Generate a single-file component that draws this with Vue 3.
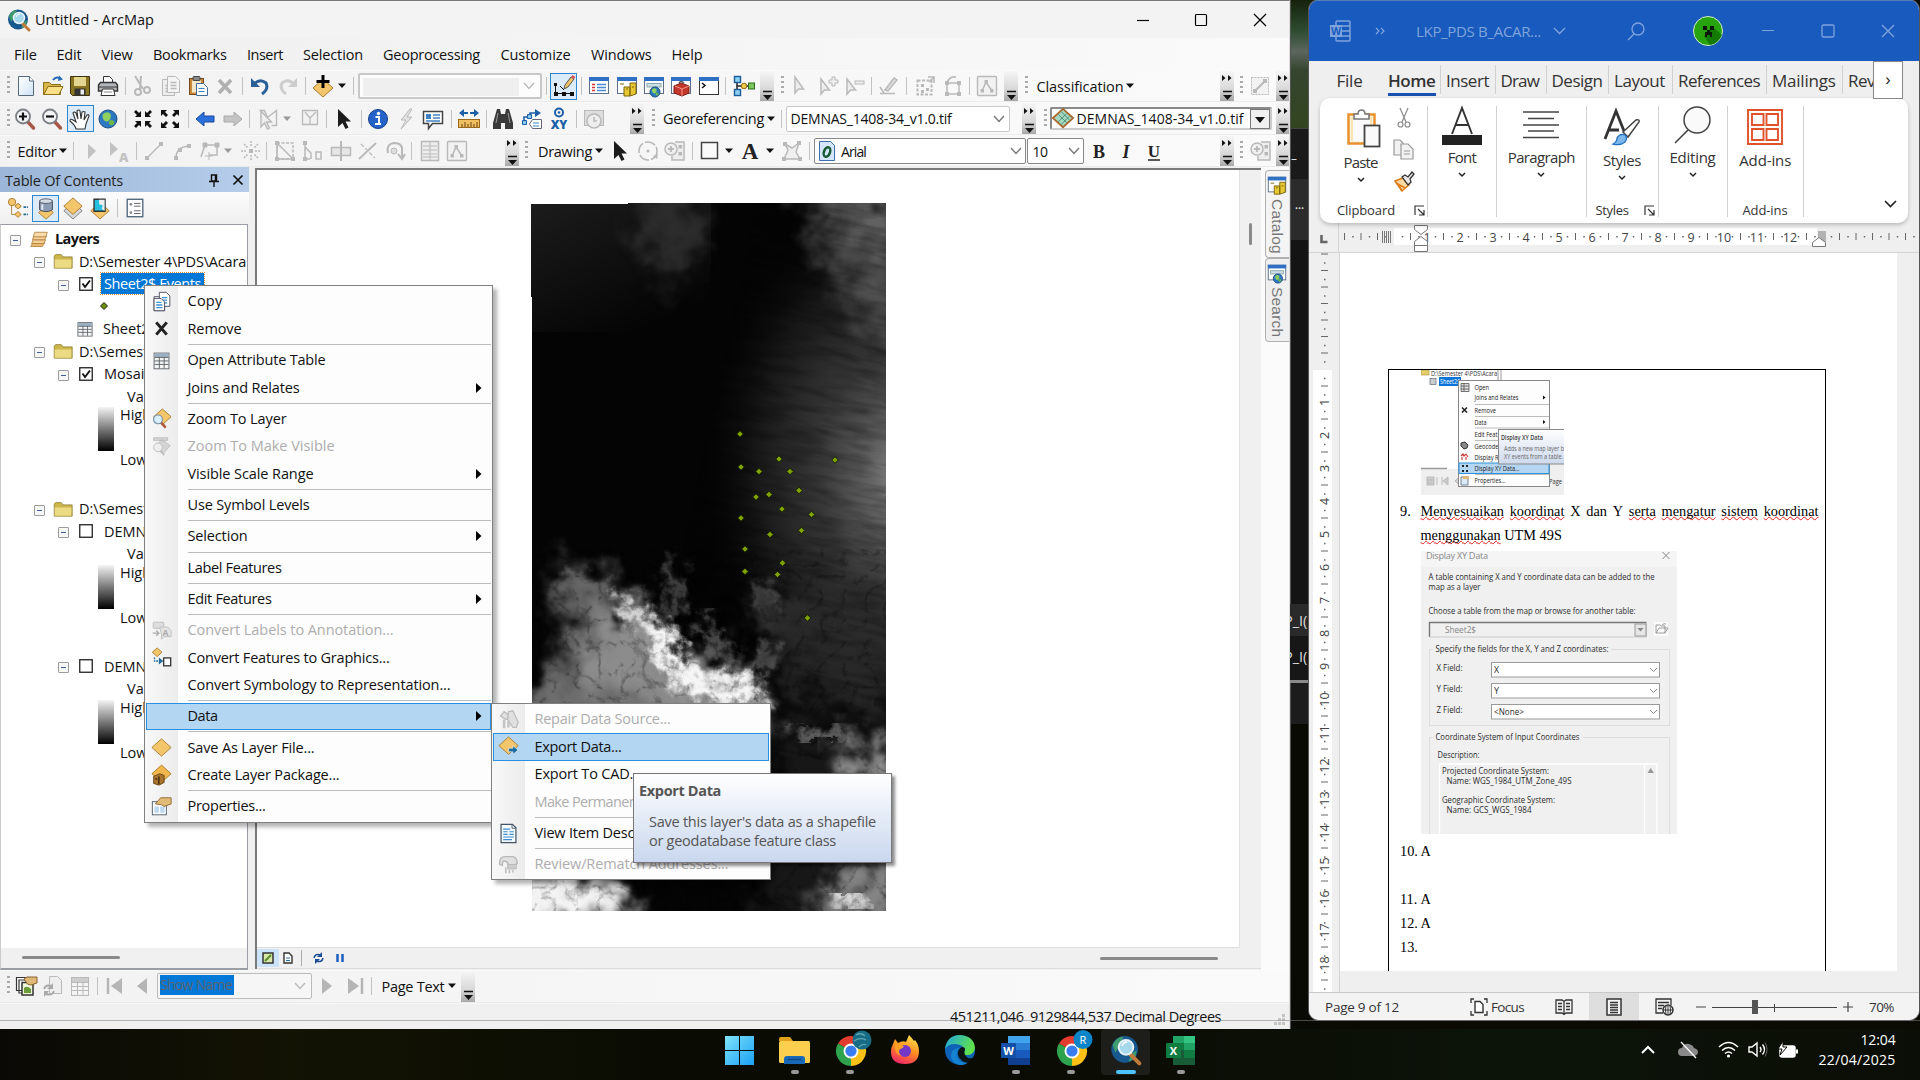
<script setup>
const measure = (el, width) => {
  el.style.letterSpacing = '0px'
  const natural = el.getBoundingClientRect().width
  const n = el.textContent.length
  if (width && n) el.style.letterSpacing = (width - natural) / n + 'px'
}
const vFit = {
  mounted: (el, b) => {
    if (b.value) measure(el, b.value)
  }
}

const G = '#b9b9b9'
const diamond = (x, y, r, f = '#f3c66c', s = '#a8782c') =>
  `<path d="M${x} ${y - r * 0.9}L${x + r} ${y}L${x} ${y + r * 0.9}L${x - r} ${y}Z" fill="${f}" stroke="${s}"/>`
const win = (inner) =>
  `<rect x="2.5" y="3.5" width="19" height="16" fill="#fff" stroke="#5b6f86"/><rect x="2" y="3" width="20" height="4" fill="#2f6fc4"/>${inner}`
const box = '<rect x="3.5" y="3.5" width="17" height="17" fill="none" stroke="#b9b9b9"/>'
const globe = (x, y, r) =>
  `<circle cx="${x}" cy="${y}" r="${r}" fill="#2c78c0" stroke="#1c4f86"/><path d="M${x - r * 0.6} ${y - r * 0.5}q${r * 0.6} ${-r * 0.5} ${r * 0.9} 0q${r * 0.1} ${r * 0.6} ${-r * 0.4} ${r * 0.8}q${-r * 0.6} ${-r * 0.1} ${-r * 0.5} ${-r * 0.8}z" fill="#8fd05c"/><circle cx="${x + r * 0.4}" cy="${y + r * 0.4}" r="${r * 0.3}" fill="#6cb94a"/>`
const pageIcon = (x, y, c, f) =>
  `<path d="M${x} ${y}h8l4 4v12h-12z" fill="${f}" stroke="${c}"/><path d="M${x + 3} ${y + 6}h6M${x + 3} ${y + 9}h6M${x + 3} ${y + 12}h6" stroke="${f === '#fff' ? '#3f8fd0' : c}" stroke-width="1.400"/>`
const tbl = (c, h) =>
  `<rect x="3.5" y="3.5" width="17" height="18" fill="#f4f4f4" stroke="${c}"/><rect x="4" y="4" width="16" height="4" fill="${h}"/><path d="M4 8.5h16M4 12.5h16M4 16.5h16M9.5 8v13M15 8v13" stroke="${c}"/>`
const lens = (x, y) =>
  `<path d="M${x + 3} ${y + 3}l5 5.500" stroke="#b05a3c" stroke-width="3" stroke-linecap="round"/><circle cx="${x}" cy="${y}" r="5" fill="#d9f0fb" stroke="#7d93a8" stroke-width="1.400"/>`

const icons = {
  fresh: '<defs><linearGradient id="pg" x1="0" y1="0" x2="1" y2="1"><stop offset="0" stop-color="#fff"/><stop offset="1" stop-color="#cfe3f5"/></linearGradient></defs><path d="M4.500 2.500h11l4 4.500v14.500h-15z" fill="url(#pg)" stroke="#55687c"/><path d="M15.500 2.500v4.500h4" fill="#fff" stroke="#55687c"/>',
  open: '<path d="M2.500 20.500v-12h6l2 2h9v10z" fill="#d9b64a" stroke="#8f6e18"/><path d="M3 20.500l4-8h15l-4 8z" fill="#fbe08a" stroke="#8f6e18"/><path d="M12 6q3-4 7-1.500" stroke="#246cb4" stroke-width="2" fill="none"/><path d="M18 1.500l4 4-5 1.500z" fill="#246cb4"/>',
  save: '<path d="M2.500 2.500h19v19h-17l-2-2z" fill="#8a7424" stroke="#3b3110"/><rect x="6" y="3" width="12" height="9" fill="#e4d68e"/><rect x="6.500" y="14.500" width="11" height="7" fill="#333"/><rect x="12.500" y="15.500" width="3.500" height="5" fill="#eee"/>',
  print: '<path d="M7.500 9V2.500h6l3 3V9" fill="#fff" stroke="#333"/><path d="M2.500 11l2-2.500h15l2 2.500v6h-19z" fill="#b4b8bc" stroke="#333" stroke-width="1.400"/><path d="M3 13h18" stroke="#333"/><path d="M6.500 15h11l1.500 6.500h-14z" fill="#fff" stroke="#333"/><path d="M8 18h8" stroke="#888"/>',
  cut: `<path d="M6 2l8 13M12 2l-1 13" stroke="${G}" stroke-width="2"/><circle cx="9" cy="18" r="3" fill="none" stroke="${G}" stroke-width="2"/><circle cx="18" cy="16" r="3" fill="none" stroke="${G}" stroke-width="2"/>`,
  copy: pageIcon(3.5, 5.5, G, '#eee') + pageIcon(8.5, 2.5, G, '#f4f4f4'),
  paste: '<rect x="3.500" y="4.500" width="14" height="16" fill="#c98a3c" stroke="#74481a"/><rect x="6" y="6.500" width="9" height="12" fill="#f6e7c8"/><rect x="7" y="2.500" width="7" height="4" rx="1" fill="#888" stroke="#444"/><path d="M10.500 9.500h7l4 4v8h-11z" fill="#fff" stroke="#3f6c9a"/><path d="M12.500 14.500h6M12.500 17.500h6" stroke="#3f82c4"/>',
  del: '<path d="M6 6l12 13M18 6L6 19" stroke="#b0b0b0" stroke-width="3.500"/>',
  undo: '<path d="M6 10q6-6 12-1q3 6-4 11" fill="none" stroke="#2b5f98" stroke-width="3"/><path d="M3 4v9h9z" fill="#2b5f98"/>',
  redo: '<path d="M18 10q-6-6-12-1q-3 6 4 11" fill="none" stroke="#cdcdcd" stroke-width="3"/><path d="M21 4v9h-9z" fill="#cdcdcd"/>',
  add: diamond(12, 14, 10) + '<path d="M12 1v13M5.500 7.500h13" stroke="#000" stroke-width="3"/>',
  sketch: '<path d="M3 19.500h18" stroke="#111"/><path d="M2 18h4v4h-4zM10 18h4v4h-4zM18 18h4v4h-4zM2 9h3v3h-3z" fill="#111"/><path d="M3.500 11v8M8 12l4 4" stroke="#111" fill="none"/><path d="M12 15l1-4 6-8 3 2-6 8z" fill="#f0c468" stroke="#555"/><path d="M19 3l1.500-2 3 2-1.500 2z" fill="#d55"/>',
  wlist: win('<path d="M5 10.500h3M5 13.500h3M5 16.500h3" stroke="#d33" stroke-width="1.500"/><path d="M10 10.500h9M10 13.500h9M10 16.500h9" stroke="#4a8ad4" stroke-width="1.500"/>'),
  wcat: win('<path d="M9 13h6v9h-6zM15 9h6v11l-6 2z" fill="#e8c832" stroke="#7c6410"/><path d="M11 15h2M17 13h2M5 10h4" stroke="#7c6410"/>'),
  wsearch: win('<rect x="5" y="9.500" width="14" height="3.500" fill="#cfdcea" stroke="#8aa"/>' + globe(13, 18, 5)),
  wtool: win('<path d="M5 12l7-3 8 3v7l-7 3-8-3z" fill="#c4372b" stroke="#7c1c14"/><path d="M10 9q2-3 5 0" fill="none" stroke="#555" stroke-width="1.500"/><path d="M6 12l7 3 7-3M13 15v7" stroke="#f2968c" fill="none"/>'),
  wpy: '<rect x="2.500" y="3.500" width="19" height="17" fill="#fff" stroke="#333"/><rect x="2" y="3" width="20" height="4" fill="#2f6fc4"/><path d="M5 9l3 2.500-3 2.500" fill="none" stroke="#111" stroke-width="1.500"/>',
  model: '<path d="M5 6v12M5 12h14" stroke="#222" stroke-width="1.500"/><rect x="2.500" y="2.500" width="6" height="6" fill="#8cd0f4" stroke="#1a5c98" stroke-width="1.400"/><rect x="2.500" y="15.500" width="6" height="6" fill="#8cd0f4" stroke="#1a5c98" stroke-width="1.400"/><circle cx="12" cy="12" r="2.800" fill="#f0c84a" stroke="#8a6a14"/><rect x="16.500" y="9" width="6" height="6" fill="#7cc85a" stroke="#2e6a1c"/>',
  garrow: `<path d="M9 3v16l3.500-4h5z" fill="#ededed" stroke="${G}" stroke-width="1.500"/>`,
  garrowp: `<path d="M5 5v15l3.500-4h5z" fill="#ededed" stroke="${G}" stroke-width="1.500"/><path d="M13 6h3v-3h3v3h3v3h-3v3h-3v-3h-3z" fill="#eee" stroke="${G}"/>`,
  garrowm: `<path d="M4 5v15l3.500-4h5z" fill="#ededed" stroke="${G}" stroke-width="1.500"/><rect x="12" y="7" width="9" height="3" fill="#eee" stroke="${G}"/>`,
  gpen: `<path d="M8 16l9-12 3 2-9 11zM3 19.500h15M3 13l4 6" fill="#ddd" stroke="${G}" stroke-width="1.500"/>`,
  gsel: `<rect x="4.500" y="6.500" width="14" height="14" fill="none" stroke="${G}" stroke-width="2" stroke-dasharray="3 1.500"/><path d="M8 10h3v3h-3zM13 14h3v3h-3zM8 16h3v3h-3z" fill="${G}"/><path d="M15 3h6v6M21 3l-5 5" fill="none" stroke="${G}" stroke-width="1.500"/>`,
  gpoly: `<path d="M6 9h12v11h-12zM6 9q2-7 9-6" fill="none" stroke="${G}" stroke-width="1.500"/><path d="M4 7h4v4h-4zM16 7h4v4h-4zM4 18h4v4h-4zM16 18h4v4h-4z" fill="${G}"/>`,
  gbox: '<rect x="2.500" y="2.500" width="19" height="19" rx="1" fill="#f2f2f2" stroke="#b9b9b9" stroke-width="1.400"/>' + `<path d="M7 17l4-9 6 9" fill="none" stroke="${G}" stroke-width="1.500"/><path d="M5.500 15h3.500v3.500h-3.500zM9.500 6h3.500v3.500h-3.500zM15 15h3.500v3.500h-3.500z" fill="${G}"/>`,
  gdash: `<rect x="3.500" y="3.500" width="17" height="17" fill="#f2f2f2" stroke="${G}" stroke-dasharray="2 1"/><path d="M7 17L17 7" stroke="${G}" stroke-width="2"/><path d="M5 15h4v4h-4zM15 5h4v4h-4z" fill="${G}"/>`,
  zin: '<path d="M14 14l6.500 7" stroke="#a85848" stroke-width="3.500" stroke-linecap="round"/><circle cx="10" cy="9.500" r="7" fill="#f2f4f6" stroke="#7b7f84" stroke-width="1.800"/><path d="M10 5.500v8M6 9.500h8" stroke="#111" stroke-width="2.200"/>',
  zout: '<path d="M14 14l6.500 7" stroke="#a85848" stroke-width="3.500" stroke-linecap="round"/><circle cx="10" cy="9.500" r="7" fill="#f2f4f6" stroke="#7b7f84" stroke-width="1.800"/><path d="M6 9.500h8" stroke="#111" stroke-width="2.200"/>',
  hand: '<path d="M8 22q-1-4-6-8q0-3 3-1l3 2-3-9q1-2 3 0l2 6-1-8q2-2 3 0l1 8 1-7q2-1 3 0l-1 8 3-5q2-1 2 1l-3 8-1 5z" fill="#fff" stroke="#333" stroke-width="1.100"/>',
  globe: globe(12, 12, 9),
  shrink: '<path d="M10 10v-6l-2 2-3-3-2 2 3 3-2 2zM14 10v-6l2 2 3-3 2 2-3 3 2 2zM10 14v6l-2-2-3 3-2-2 3-3-2-2zM14 14v6l2-2 3 3 2-2-3-3 2-2z" fill="#111"/>',
  grow: '<path d="M3 3h6l-2 2 3 3-2 2-3-3-2 2zM21 3h-6l2 2-3 3 2 2 3-3 2 2zM3 21h6l-2-2 3-3-2-2-3 3-2-2zM21 21h-6l2-2-3-3 2-2 3 3 2-2z" fill="#111"/>',
  back: '<path d="M2 12l8-7v4h10v6h-10v4z" fill="#2a6fdc" stroke="#1a4a9c"/>',
  fwd: '<path d="M22 12l-8-7v4h-10v6h10v4z" fill="#c4c4c4" stroke="#aaa"/>',
  gself: `<path d="M3.500 3.500h5l3 7 9-7v15h-5" fill="none" stroke="${G}" stroke-width="1.400"/><path d="M5 4v16l3.500-4 3 6 2-1-3-6h5z" fill="#eee" stroke="${G}" stroke-width="1.400"/>`,
  gclr: `<path d="M4.500 3.500h15v14h-15zM7 5l5 6v6M12 11l6-6" fill="#f2f2f2" stroke="${G}" stroke-width="1.300"/>`,
  arrow: '<path d="M7 2v18l4.500-4 3 6 3-1.500-3-6h5.500z" fill="#1c1c1c"/>',
  info: '<circle cx="12" cy="12" r="9.500" fill="#2464c8" stroke="#143f8a"/><path d="M9.500 10h3.500v7h2M9 17h6" stroke="#fff" stroke-width="2" fill="none"/><circle cx="12.500" cy="6.500" r="1.700" fill="#fff"/>',
  bolt: `<path d="M16 2l-9 11h5l-5 9 11-12h-5l5-8z" fill="#e2e2e2" stroke="${G}"/>`,
  popup: '<path d="M2.500 4.500h19v12h-10l-4 5v-5h-5z" fill="#fff" stroke="#444" stroke-width="1.500"/><rect x="5" y="7" width="5" height="5" fill="#3f82c4"/><path d="M12 8h7M12 11h7M5 14h14" stroke="#3f82c4" stroke-width="1.500"/>',
  ruler: '<path d="M2 6l5-4v3h4v2h-4v3zM22 6l-5-4v3h-4v2h4v3z" fill="#1c5fa8"/><rect x="1.500" y="12.500" width="21" height="8" fill="#f0bf62" stroke="#98671c"/><path d="M5 17v3M8 15v5M11 17v3M14 15v5M17 17v3M20 15v5" stroke="#6b4510"/>',
  binoc: '<path d="M6 2h3l1 5h4l1-5h3l4 14v6h-8v-6h-4v6h-8v-6z" fill="#3a3a3a"/><path d="M7 6l-2 10M17 6l2 10" stroke="#999"/>',
  route: '<path d="M4 18v-8h6v-4h6" fill="none" stroke="#1c5fa8" stroke-width="1.500"/><path d="M2.500 13.500h4v4h-4zM7.500 7.500h4v4h-4z" fill="#8cc8ec" stroke="#1c5fa8"/><path d="M15 2l6 4-6 4z" fill="#1c5fa8"/><path d="M12.500 12.500h9v9h-9l-3-4.500z" fill="#fff" stroke="#667"/><path d="M13 16h6M13 19h6" stroke="#3f82c4"/>',
  xy: '<circle cx="12" cy="5.500" r="4" fill="none" stroke="#1c5fa8" stroke-width="2"/><circle cx="12" cy="5.500" r="1.300" fill="#1c5fa8"/><text x="12" y="22" text-anchor="middle" font-family="Open Sans" font-weight="800" font-size="12" fill="#1c5fa8">XY</text>',
  gtime: `<rect x="2.500" y="3.500" width="19" height="15" fill="#ddd" stroke="${G}"/><circle cx="12" cy="14" r="7" fill="#eee" stroke="${G}" stroke-width="1.500"/><path d="M12 10v4h3" stroke="${G}" fill="none" stroke-width="1.500"/>`,
  gtri: '<path d="M8 5v15l8-8z" fill="#c2c2c2"/>',
  gtriA: '<path d="M3 3v14l8-7z" fill="#c2c2c2"/><text x="12" y="23" font-family="Open Sans" font-weight="800" font-size="13" fill="#c2c2c2">A</text>',
  gline: `<path d="M5 19L19 5" stroke="${G}" stroke-width="1.500"/><path d="M3 17h4v4h-4zM17 3h4v4h-4z" fill="${G}"/>`,
  gcurve: `<path d="M6 19q0-11 13-12" stroke="${G}" stroke-width="1.500" fill="none"/><path d="M4 17h4v4h-4zM17 5h4v4h-4zM8 9h4v4h-4z" fill="${G}"/>`,
  gtrap: `<path d="M3 18L7 6h12v10h-8" stroke="${G}" stroke-width="1.500" fill="none"/><path d="M5 4h4v4h-4zM17 4h4v4h-4zM11 13v8M7 17h8" fill="${G}" stroke="${G}"/>`,
  gburst: `<path d="M12 2v6M12 16v6M2 12h6M16 12h6M5 5l4 4M19 5l-4 4M5 19l4-4M19 19l-4-4" stroke="${G}" stroke-width="1.500" stroke-dasharray="2 1"/><rect x="10" y="10" width="4" height="4" fill="${G}"/>`,
  gcut1: `<path d="M4 4h16v16h-16z" fill="none" stroke="${G}" stroke-width="1.500" stroke-dasharray="3 1.500"/><path d="M4 4v16h16z" fill="none" stroke="${G}" stroke-width="1.500"/><path d="M2 2h4v4h-4zM2 18h4v4h-4zM18 18h4v4h-4z" fill="${G}"/>`,
  gcut2: `<path d="M5 4v16h5M5 8l6 6v6M16 13h5v7h-5z" fill="none" stroke="${G}" stroke-width="1.500"/><path d="M3 2h4v4h-4zM3 18h4v4h-4z" fill="${G}"/>`,
  gsplit: `<path d="M2.500 8.500h19v8h-19z" fill="#e6e6e6" stroke="${G}" stroke-width="1.500"/><path d="M12 2v20" stroke="${G}" stroke-width="2"/>`,
  gx: `<path d="M3 20L20 4" stroke="${G}" stroke-width="1.800"/><path d="M5 5l14 14" stroke="${G}" stroke-width="1.200" stroke-dasharray="4 2"/>`,
  grot: `<path d="M5 14q-2-9 6-10q9 0 8 8v6M15 15l4 5 3-5" fill="none" stroke="${G}" stroke-width="2"/><circle cx="11" cy="12" r="3" fill="#ddd" stroke="${G}"/>`,
  gtab: `<rect x="3.500" y="2.500" width="17" height="19" fill="#eee" stroke="${G}" stroke-width="1.500"/><path d="M5 7h14M5 11h14M5 15h14M5 18h14M12 3v18" stroke="${G}"/>`,
  rot: `<circle cx="12" cy="12" r="9" fill="none" stroke="${G}" stroke-width="1.600" stroke-dasharray="11 2"/><circle cx="12" cy="12" r="1.500" fill="${G}"/><path d="M17 17l4 3 1-5z" fill="${G}"/>`,
  gzoomp: `<path d="M12 3h9v18h-12v-4" stroke="${G}" stroke-width="1.500" fill="#eee"/><circle cx="8" cy="10" r="6" fill="#f0f0f0" stroke="${G}" stroke-width="1.500"/><path d="M8 7v6M5 10h6" stroke="${G}" stroke-width="1.800"/><path d="M15.500 6h3.500v3.500h-3.500zM15.500 13h3.500v3.500h-3.500z" fill="${G}"/>`,
  rect: '<rect x="3.500" y="3.500" width="16" height="16" fill="#fafafa" stroke="#444" stroke-width="1.500"/>',
  bigA: '<text x="12" y="20" text-anchor="middle" font-family="Liberation Serif" font-weight="700" font-size="23" fill="#222">A</text>',
  gverts: `<path d="M4 20l4-9-3-6 7 4 7-5-3 9 4 7z" fill="#f0f0f0" stroke="${G}" stroke-width="1.500"/><path d="M2 18h4v4h-4zM3 3h4v4h-4zM17 2h4v4h-4zM18 18h4v4h-4z" fill="${G}"/>`,
  B: '<text x="12" y="19" text-anchor="middle" font-family="Liberation Serif" font-weight="700" font-size="18" fill="#222">B</text>',
  I: '<text x="12" y="19" text-anchor="middle" font-family="Liberation Serif" font-weight="700" font-style="italic" font-size="18" fill="#222">I</text>',
  U: '<text x="12" y="18" text-anchor="middle" font-family="Liberation Serif" font-weight="700" font-size="17" fill="#222">U</text><path d="M6 21h12" stroke="#222" stroke-width="1.500"/>',
  pagestack: '<path d="M2.500 3.500h11v13h-11zM5 6h11v13h-11z" fill="#fff" stroke="#333" stroke-width="1.200"/><path d="M8 8.500h11v12.500h-11z" fill="#eef6dc" stroke="#333" stroke-width="1.500"/><path d="M10 19v-5q3-3 7 1v4z" fill="#6a9c3a"/><path d="M10 5q3-3 6-2h7v6l-6 2q-4 0-5-3z" fill="#e0b878" stroke="#8a6430"/>',
  grefresh: `<path d="M8.500 2.500h8l4 4v13h-12z" fill="#eee" stroke="${G}"/><path d="M3 15q2-5 7-3M13 17q-2 5-8 3" stroke="#a8a8a8" stroke-width="2" fill="none"/><path d="M12 9v6h-6zM3 23v-6h5z" fill="#a8a8a8"/>`,
  gtable: tbl('#b9b9b9', '#ccc'),
  first: '<path d="M5 4v16" stroke="#b5b5b5" stroke-width="2.500"/><path d="M19 4v16l-11-8z" fill="#b5b5b5"/>',
  prev: '<path d="M17 4v16l-10-8z" fill="#b5b5b5"/>',
  next: '<path d="M7 4v16l10-8z" fill="#b5b5b5"/>',
  last: '<path d="M19 4v16" stroke="#b5b5b5" stroke-width="2.500"/><path d="M5 4v16l11-8z" fill="#b5b5b5"/>',
  toc1: '<path d="M5 6v13M5 19h7M10 11h5" stroke="#b08040" fill="none"/><circle cx="5.500" cy="5.500" r="4" fill="#f3c66c" stroke="#a8782c"/>' + diamond(12, 10, 3.5) + diamond(12, 19, 3.5) + '<path d="M18 11h5M18 19h5" stroke="#246c9c" stroke-width="2" stroke-dasharray="3 1"/>',
  toc2: diamond(12, 17, 8) + '<path d="M5 4v10q7 4 14 0v-10z" fill="#8c9cb4" stroke="#445"/><ellipse cx="12" cy="4.500" rx="7" ry="2.500" fill="#d4dce8" stroke="#556"/><path d="M8 8v6" stroke="#e8eef8" stroke-width="2"/>',
  toc3: diamond(12, 15, 10, '#d5d8da', '#7a7a7a') + diamond(12, 10, 10),
  toc4: diamond(12, 15, 10) + '<path d="M5.500 2.500h12v13h-12z" fill="#28c0e0" stroke="#333" stroke-width="1.500"/><path d="M11 3h6v12l-3-2 1-4-4-1z" fill="#eee"/>',
  toc5: '<rect x="3.500" y="2.500" width="17" height="19" fill="#fff" stroke="#55687c" stroke-width="1.500"/><path d="M11 7h7M11 10h7M11 15h7M11 18h7" stroke="#556"/><circle cx="7.500" cy="8" r="1.500" fill="#888"/><circle cx="7.500" cy="17" r="1.500" fill="#888"/>',
  layers: '<path d="M5 17h14l-3 5h-14z" fill="#e8b870" stroke="#b07c38"/><path d="M5 13h15l-2 5h-15z" fill="#f3cf98" stroke="#b07c38"/><path d="M6 8h15l-2 5h-15z" fill="#f3cf98" stroke="#b07c38"/><path d="M7 3h15l-2 6h-15z" fill="#f8dcae" stroke="#b07c38"/>',
  folder: '<path d="M1.500 21.500v-16l1.500-2h7l2 3h11v15z" fill="#cdb64c" stroke="#8a7a28"/><path d="M2 10h20v11h-20z" fill="#eadb84"/>',
  table: tbl('#6b7680', '#8cb4e0'),
  mtable: tbl('#555b60', '#9cb0c4'),
  mcopy: pageIcon(3.5, 6.5, '#445', '#fff') + pageIcon(9.5, 1.5, '#445', '#fff') + '<path d="M3.500 8.500h8l4 4v10h-12z" fill="#fff" stroke="#445"/><path d="M6 13h6M6 16h7M6 19h7" stroke="#3f8fd0" stroke-width="1.500"/>',
  mx: '<path d="M6 5l12 14M18 5L6 19" stroke="#222" stroke-width="3.500"/>',
  mzoom: diamond(13, 10, 10) + lens(8, 13),
  mzoomg: '<path d="M3 2h16v3h-16zM12 4l10 7-8 9-10-6z" fill="#d4d4d4" stroke="#bbb"/><circle cx="8" cy="13" r="5" fill="#eee" stroke="#bbb"/><path d="M11 17l4 5" stroke="#bbb" stroke-width="2"/>',
  mlabel: '<rect x="2.500" y="2.500" width="12" height="7" rx="1" fill="#ddd" stroke="#bbb"/><path d="M10 8h9l4 4v7h-8l-3 3v-5z" fill="#e4e4e4" stroke="#bbb"/><text x="13" y="18" font-family="Open Sans" font-size="10" font-weight="700" fill="#aaa">A</text><path d="M2 15h7M6 12l3 3-3 3" stroke="#aaa" fill="none" stroke-width="1.500"/>',
  mgraph: diamond(7, 6, 5.500) + '<path d="M4 12v4h8" stroke="#1c6ca0" stroke-width="1.500" fill="none" stroke-dasharray="2 1"/><path d="M9 12l5 4-5 4z" fill="#1c6ca0"/><rect x="14.500" y="12.500" width="8" height="9" fill="#fff" stroke="#333" stroke-width="1.500"/>',
  msave: diamond(12, 12, 11),
  mpack: diamond(12, 10, 11, '#f0b84c') + '<path d="M3 13l7-3 5 2v8l-6 3-6-2z" fill="#a8742c" stroke="#60401a"/><path d="M9 13v9M5 16h2" stroke="#3a240c" stroke-width="1.500"/>',
  mprop: '<rect x="1.500" y="6.500" width="16" height="15" fill="#fff" stroke="#456"/><path d="M4 12h5v7h-5zM10.500 12h5v7h-5z" fill="#bcd8f0"/><path d="M5 9l6-7h12v7l-8 3-3-2z" fill="#e0bc78" stroke="#8a6430"/>',
  mfix: '<path d="M3 8l4-5 4 3 1 4-3 2zM12 3l5-1 6 13-2 6h-4l-6-9z" fill="#e0e0e0" stroke="#bdbdbd" stroke-width="1.500"/><path d="M7 12v10M12 14v7" stroke="#c4c4c4" stroke-width="3"/>',
  mexport: diamond(12, 11, 11) + '<path d="M12 14h5v-3l6 5-6 5v-3h-5z" fill="#1c6ca0" stroke="#fff" stroke-width=".6"/>',
  mview: '<path d="M3.500 1.500h13l4 4v17h-17z" fill="#f4f9fe" stroke="#456" stroke-width="1.400"/><path d="M16 2v4h4" fill="none" stroke="#456"/><path d="M6 7h8M6 10h5M13 10h5M6 13h5M13 13h5M6 16h12M6 19h10" stroke="#3f8fd0" stroke-width="1.400"/>',
  mmail: '<path d="M2 12q-1-9 6-9h9q5 1 5 8l-4 2h-6q-1-5-5-5-2 0-2 5zM9 15v7M13 18v4M17 18v3" fill="#e0e0e0" stroke="#b8b8b8" stroke-width="1.600"/><path d="M11 12h10v5h-10z" fill="#ccc" stroke="#b8b8b8"/>',
  arc: '<circle cx="11" cy="11.500" r="10" fill="#17588e"/><path d="M2 8q3-6 8-6l-3 7-3 5zM16 15l4-3-1 6-5 3z" fill="#3f9c6c"/><path d="M15 15l7 7" stroke="#c07a3c" stroke-width="3" stroke-linecap="round"/><circle cx="12" cy="10" r="5.500" fill="#a4d8ea" stroke="#e8f2f8" stroke-width="1.500"/><path d="M9 9q1-3 4-3" stroke="#fff" fill="none"/>'
}

const widths = { i: 24, a: 27, s: 1, c: 8, o: 14, g: 3 }
function build(items) {
  let end = 0
  return items.map((it) => {
    const [t, x, v, w] = it
    let left, width
    if (t === 't' || t === 'd') { left = x; width = w } else if (t === 'o') { left = x; width = 14 } else { width = widths[t]; left = x - width / 2 }
    const m = left - end
    end = left + width
    return { t, v, w, k: it[4], style: { marginLeft: m + 'px', width: width + 'px' } }
  })
}
const menuBar = build([
  ['t', 14, 'File', 23], ['t', 56.5, 'Edit', 25], ['t', 101.5, 'View', 31], ['t', 153, 'Bookmarks', 73.5], ['t', 247, 'Insert', 36],
  ['t', 303, 'Selection', 60], ['t', 383, 'Geoprocessing', 97], ['t', 500.5, 'Customize', 70], ['t', 591, 'Windows', 60.5], ['t', 671.5, 'Help', 31]
])
const rows = [
  build([['g', 8], ['i', 26, 'fresh'], ['i', 52.5, 'open'], ['i', 80, 'save'], ['i', 107.5, 'print'], ['s', 125], ['i', 140.5, 'cut'], ['i', 171, 'copy'], ['i', 198, 'paste'], ['i', 225, 'del'], ['s', 242], ['i', 260, 'undo'], ['i', 288, 'redo'], ['s', 305], ['i', 322.5, 'add'], ['c', 342], ['s', 353.5], ['d', 358, '', 184, 'dis'], ['s', 546], ['a', 563.5, 'sketch'], ['s', 581], ['i', 599, 'wlist'], ['i', 626.5, 'wcat'], ['i', 654, 'wsearch'], ['i', 681, 'wtool'], ['i', 708.6, 'wpy'], ['s', 726], ['i', 744, 'model'], ['o', 760], ['g', 783], ['i', 798.5, 'garrow'], ['i', 828, 'garrowp'], ['i', 855.5, 'garrowm'], ['s', 872], ['i', 889, 'gpen'], ['s', 907], ['i', 925, 'gsel'], ['i', 953.5, 'gpoly'], ['s', 969.5], ['i', 987, 'gbox'], ['o', 1004], ['g', 1027], ['t', 1036.5, 'Classification', 87], ['c', 1130.5], ['o', 1220, 1], ['g', 1242], ['i', 1260, 'gdash'], ['o', 1276, 1]]),
  build([['g', 8], ['i', 25, 'zin'], ['i', 52, 'zout'], ['a', 80, 'hand'], ['i', 108, 'globe'], ['s', 125], ['i', 142.5, 'shrink'], ['i', 170, 'grow'], ['s', 188], ['i', 206, 'back'], ['i', 232, 'fwd'], ['s', 249.5], ['i', 268, 'gself'], ['c', 287, 'g'], ['i', 310, 'gclr'], ['s', 326], ['i', 343, 'arrow'], ['s', 361], ['i', 378, 'info'], ['i', 406, 'bolt'], ['i', 433, 'popup'], ['s', 451], ['i', 469, 'ruler'], ['s', 486], ['i', 503, 'binoc'], ['i', 532, 'route'], ['i', 559, 'xy'], ['s', 576], ['i', 594, 'gtime'], ['o', 630, 1], ['g', 653], ['t', 663, 'Georeferencing', 101], ['c', 770.5], ['s', 781], ['d', 785.5, 'DEMNAS_1408-34_v1.0.tif', 224, 'geo'], ['o', 1022, 1], ['g', 1045], ['d', 1049.5, 'DEMNAS_1408-34_v1.0.tif', 222, 'layer'], ['o', 1276, 1]]),
  build([['g', 8], ['t', 17.5, 'Editor', 39], ['c', 63], ['s', 73.5], ['i', 92, 'gtri'], ['i', 119, 'gtriA'], ['s', 136], ['i', 154, 'gline'], ['i', 181.6, 'gcurve'], ['i', 210, 'gtrap'], ['c', 228, 'g'], ['i', 251, 'gburst'], ['s', 267], ['i', 285, 'gcut1'], ['i', 312, 'gcut2'], ['i', 341, 'gsplit'], ['i', 368, 'gx'], ['i', 395.5, 'grot'], ['s', 412], ['i', 430, 'gtab'], ['i', 457, 'gbox'], ['o', 505, 1], ['g', 527], ['t', 538, 'Drawing', 54], ['c', 599.5], ['i', 619.5, 'arrow'], ['i', 647.6, 'rot'], ['i', 675, 'gzoomp'], ['s', 692.6], ['i', 710, 'rect'], ['c', 729], ['i', 750, 'bigA'], ['c', 770.5], ['i', 792, 'gverts'], ['s', 810], ['d', 814, 'Arial', 212, 'font'], ['d', 1027.5, '10', 57, 'size'], ['i', 1099, 'B'], ['i', 1126.5, 'I'], ['i', 1154, 'U'], ['o', 1220, 1], ['g', 1242], ['i', 1261, 'gzoomp'], ['o', 1276, 1]])
]
const bottomRow = build([['g', 8], ['i', 25.5, 'pagestack'], ['i', 53, 'grefresh'], ['i', 79.5, 'gtable'], ['s', 97], ['i', 114.5, 'first'], ['i', 142, 'prev'], ['d', 157, 'Show Name', 155, 'show'], ['i', 327, 'next'], ['i', 354.5, 'last'], ['s', 371], ['t', 381.5, 'Page Text', 63], ['c', 452], ['o', 461]])
const bars = [...rows, bottomRow]
const fitOf = { geo: 161, layer: 167, font: 25, size: 15, show: 72 }

const tocTools = build([['i', 18, 'toc1'], ['a', 45.5, 'toc2'], ['i', 73, 'toc3'], ['i', 100, 'toc4'], ['s', 117], ['i', 135, 'toc5']])

const tree = [
  { l: 0, icon: 'layers', text: 'Layers', b: 1, w: 44 },
  { l: 1, icon: 'folder', text: 'D:\\Semester 4\\PDS\\Acara', w: 167 },
  { l: 2, check: 1, on: 1, text: 'Sheet2$ Events', sel: 1, w: 97 },
  { sym: 1 },
  { l: 3, text: 'Sheet2$' },
  { l: 1, icon: 'folder', text: 'D:\\Semester 4' },
  { l: 2, check: 1, on: 1, text: 'Mosaic' }, { val: 1 }, { ramp: 1 },
  { l: 1, icon: 'folder', text: 'D:\\Semester 4' },
  { l: 2, check: 1, text: 'DEMNAS' }, { val: 1 }, { ramp: 1 },
  { l: 2, check: 1, text: 'DEMNAS' }, { val: 1 }, { ramp: 1 }
]

const menu = [
  { t: 'Copy', i: 'mcopy', w: 35 }, { t: 'Remove', i: 'mx', w: 54 }, 0,
  { t: 'Open Attribute Table', i: 'mtable', w: 138 }, { t: 'Joins and Relates', sub: 1, w: 112 }, 0,
  { t: 'Zoom To Layer', i: 'mzoom', w: 99 }, { t: 'Zoom To Make Visible', i: 'mzoomg', off: 1, w: 147 }, { t: 'Visible Scale Range', sub: 1, w: 126 }, 0,
  { t: 'Use Symbol Levels', w: 122 }, 0, { t: 'Selection', sub: 1, w: 60 }, 0, { t: 'Label Features', w: 94 }, 0, { t: 'Edit Features', sub: 1, w: 84 }, 0,
  { t: 'Convert Labels to Annotation...', i: 'mlabel', off: 1, w: 206 }, { t: 'Convert Features to Graphics...', i: 'mgraph', w: 202 }, { t: 'Convert Symbology to Representation...', w: 263 }, 0,
  { t: 'Data', sub: 1, hot: 1, w: 30 }, 0,
  { t: 'Save As Layer File...', i: 'msave', w: 127 }, { t: 'Create Layer Package...', i: 'mpack', w: 152 }, 0, { t: 'Properties...', i: 'mprop', w: 78 }
]
const submenu = [
  { t: 'Repair Data Source...', i: 'mfix', off: 1, w: 136 }, { t: 'Export Data...', i: 'mexport', hot: 1, w: 87 }, { t: 'Export To CAD...', w: 106 }, { t: 'Make Permanent', off: 1, w: 107 }, 0,
  { t: 'View Item Description...', i: 'mview', w: 154 }, 0, { t: 'Review/Rematch Addresses...', i: 'mmail', off: 1, w: 194 }
]
const pts = [[740, 435], [779, 460], [835, 461], [741, 468], [759, 472.5], [790, 472.5], [799, 491.5], [769, 495.5], [756, 498], [782, 510], [811.5, 515.5], [741, 519], [801.5, 531.5], [770, 535.5], [745, 550], [782.5, 564], [745, 572.5], [777.5, 575.5], [807.5, 619]]
const valleys = [
  'M886 470l-40-20-40-30-50-10-40 5', 'M886 500l-50-8-60 4-50-12', 'M886 535l-45-5-40 6-50-8', 'M886 480q-30-4-50 4t-50-6-50 0',
  'M886 560l-60-6-50 12', 'M886 600l-50-12-50 4', 'M886 630l-60-4-40-10', 'M886 655l-50 4-50-14', 'M886 320l-30-30-30-50-20-20',
  'M886 360l-30-40-30-20-10-30', 'M886 440l-40-34-60-30-40 0', 'M770 590q20 10 22 30t-12 60', 'M886 740l-40-20-20-14-60-10', 'M790 700l30 30 30 10'
]

const tabs = [['File', 1336.5, 26], ['Home', 1388, 47.5], ['Insert', 1446, 43], ['Draw', 1500.5, 38.5], ['Design', 1551.5, 51], ['Layout', 1614, 51], ['References', 1678, 82], ['Mailings', 1772, 63.5], ['Rev', 1848, 27]]
let tEnd = 1309
const wordTabs = tabs.map(([t, x, w], i) => {
  const s = { marginLeft: x - tEnd + 'px', width: w + 'px' }
  tEnd = x + w
  return { t, w, s, sep: i > 1 && i < 9 }
})

const hTicks = []
for (let q = -6; q <= 70; q++) {
  const v = q / 4
  const x = 55 + v * 33
  if (v > 15.9) continue
  if (v > 0 && v < 13 && q % 4 === 0) { hTicks.push({ n: v, x }); continue }
  if (q === 0 || v === 13) continue
  hTicks.push({ x, bar: q % 4 === 2 || q % 4 === -2 || q % 4 === 0 })
}
const vTicks = []
for (let q = -14; q <= 75; q++) {
  const y = 116.5 + q * 8.25
  if (q > 0 && q % 4 === 0) { vTicks.push({ n: q / 4, y }); continue }
  if (q === 0) continue
  vTicks.push({ y, bar: q % 4 === 2 || q % 4 === -2 || (q < 0 && q % 4 === 0) })
}

const shotItems = [['Open', 17, 14.5], ['Joins and Relates', 27.5, 44, 1], ['Remove', 40, 21.5], ['Data', 52, 12, 1], ['Edit Feat', 64, 23], ['Geocode', 76.5, 24], ['Display R', 87, 24], ['Display XY Data...', 98, 45], ['Properties...', 110.5, 31]]
const fields = [['X Field:', 'X', 111, 5], ['Y Field:', 'Y', 132, 5], ['Z Field:', '<None>', 153, 30]]
</script>

<template>
  <div class="desk">
    <!-- strip of the windows lying behind -->
    <div class="behind">
      <div class="photo"></div>
      <div class="app a1"><span>–</span></div>
      <div class="app a2">•••</div>
      <div class="app a3"></div>
      <div class="app a4">P_I(</div>
      <div class="app a5">P_I(</div>
      <div class="app a6"></div>
      <div class="grow"></div>
    </div>

    <!-- ArcMap -->
    <section class="arc">
      <header class="title">
        <svg viewBox="0 0 24 24" width="24" height="24" v-html="icons.arc"></svg>
        <div><span v-fit="119">Untitled - ArcMap</span></div>
        <div class="caps">
          <svg width="14" height="14"><path d="M1 7.500h12" stroke="#000" stroke-width="1.200" /></svg>
          <svg width="14" height="14"><rect x="1.500" y="1.500" width="11" height="11" rx="1" fill="none" stroke="#000" stroke-width="1.200" /></svg>
          <svg width="14" height="14"><path d="M1 1l12 12M13 1L1 13" stroke="#000" stroke-width="1.200" /></svg>
        </div>
      </header>
      <nav class="menubar">
        <div v-for="m in menuBar" :key="m.v" :style="m.style"><span v-fit="m.w">{{ m.v }}</span></div>
      </nav>
      <div v-for="(bar, bi) in bars" :key="bi" class="bar" :class="'bar' + bi">
        <div v-for="(it, k) in bar" :key="k" :class="['it', 'k-' + it.t]" :style="it.style">
          <svg v-if="it.t === 'i' || it.t === 'a'" viewBox="0 0 24 24" width="24" height="24" v-html="icons[it.v]"></svg>
          <svg v-else-if="it.t === 'c'" width="8" height="6"><path d="M0 0.500h8l-4 4.500z" :fill="it.v ? '#9a9a9a' : '#111'" /></svg>
          <svg v-else-if="it.t === 'o'" width="14" height="32">
            <path v-if="it.v" d="M2 5l3.500 3-3.500 3zM8 5l3.500 3-3.500 3z" fill="#111" />
            <path d="M3 21.500h9" stroke="#111" stroke-width="1.500" /><path d="M3 25h9l-4.500 5z" fill="#111" />
          </svg>
          <span v-else-if="it.t === 't'" v-fit="it.w">{{ it.v }}</span>
          <div v-else-if="it.t === 'd'" :class="['combo', 'cb-' + it.k]">
            <svg v-if="it.k === 'layer'" width="22" height="22" viewBox="0 0 24 24"><path d="M12 1l11 10-11 10L1 11z" fill="#a9d8c0" stroke="#a8682c" stroke-width="2" /><path d="M7 7l9 9M10 4l9 9M7 15l9-9M10 18l9-9" stroke="#3c8c74" /></svg>
            <svg v-if="it.k === 'font'" width="16" height="20" viewBox="0 0 16 20"><path d="M.5 .5h11l4 4v15h-15z" fill="#d4e6fa" stroke="#3f6cb0" /><ellipse cx="8" cy="11" rx="3" ry="5" transform="rotate(20 8 11)" fill="none" stroke="#1a5a30" stroke-width="2.500" /></svg>
            <div v-if="it.v" class="cv-text"><span v-fit="fitOf[it.k]">{{ it.v }}</span></div>
            <i></i>
            <svg v-if="it.k === 'layer'" class="drop" width="20" height="20"><rect x=".5" y=".5" width="19" height="19" fill="#f0f0f0" stroke="#777" /><path d="M5 8h10l-5 6z" fill="#111" /></svg>
            <svg v-else class="drop" width="12" height="8"><path d="M1 1l5 5.500 5-5.500" fill="none" :stroke="it.k === 'dis' || it.k === 'show' ? '#bbb' : '#777'" stroke-width="1.400" /></svg>
          </div>
        </div>
      </div>

      <div class="work">
        <aside class="toc">
          <div class="tochead">
            <div><span v-fit="118">Table Of Contents</span></div>
            <svg width="10" height="13"><path d="M2.500 1h5v6h-5zM0 7.500h10M5 8v5M6.500 1v6" fill="none" stroke="#111" stroke-width="1.400" /></svg>
            <svg width="10" height="10"><path d="M0.500 0.500l9 9M9.500 0.500l-9 9" stroke="#111" stroke-width="1.700" /></svg>
          </div>
          <div class="toctools">
            <div v-for="(it, k) in tocTools" :key="k" :class="['it', 'k-' + it.t]" :style="it.style">
              <svg v-if="it.t !== 's'" viewBox="0 0 24 24" width="22" height="22" v-html="icons[it.v]"></svg>
            </div>
          </div>
          <div class="tree">
            <div v-for="(r, k) in tree" :key="k" :class="['tr', r.ramp ? 'ramp' : '', 'l' + r.l]">
              <template v-if="r.ramp"><div class="grad"></div><div class="hl"><span>High</span><span>Low</span></div></template>
              <template v-else-if="r.sym"><svg class="sym" width="8" height="8"><path d="M4 .5l3.500 3.500L4 7.500.5 4z" fill="#6b8e00" stroke="#222" /></svg></template>
              <template v-else-if="r.val"><span class="val">Value</span></template>
              <template v-else>
                <b v-if="r.l < 3" class="exp"></b>
                <svg v-if="r.icon" class="fi" viewBox="0 0 24 24" width="20" height="18" preserveAspectRatio="none" v-html="icons[r.icon]"></svg>
                <svg v-if="r.l === 3" class="ti" viewBox="0 0 24 24" width="20" height="18" preserveAspectRatio="none" v-html="icons.mtable"></svg>
                <svg v-if="r.check" class="ck" width="14" height="14"><rect x=".75" y=".75" width="12.500" height="12.500" fill="#fff" stroke="#222" stroke-width="1.300" /><path v-if="r.on" d="M3.500 6.500l2.500 3.500 5-6.500" fill="none" stroke="#111" stroke-width="1.900" /></svg>
                <span :class="{ bold: r.b, sel: r.sel }"><em v-fit="r.w">{{ r.text }}</em></span>
              </template>
            </div>
            <div class="hbar"><i></i></div>
          </div>
        </aside>

        <main class="map">
          <div class="canvas">
            <svg class="dem" viewBox="531 203 355 709" width="355" height="709">
              <defs>
                <filter id="soft" x="-30%" y="-30%" width="160%" height="160%" color-interpolation-filters="sRGB">
                  <feGaussianBlur stdDeviation="11" result="b" />
                  <feTurbulence type="fractalNoise" baseFrequency="0.035" numOctaves="6" seed="7" result="n" />
                  <feDisplacementMap in="b" in2="n" scale="70" xChannelSelector="R" yChannelSelector="G" />
                  <feGaussianBlur stdDeviation="0.900" />
                </filter>
                <filter id="ridge" x="-30%" y="-30%" width="160%" height="160%" color-interpolation-filters="sRGB">
                  <feGaussianBlur stdDeviation="6" result="b" />
                  <feTurbulence type="fractalNoise" baseFrequency="0.060" numOctaves="5" seed="3" result="n" />
                  <feDisplacementMap in="b" in2="n" scale="44" xChannelSelector="R" yChannelSelector="G" />
                  <feGaussianBlur stdDeviation="0.700" />
                </filter>
                <filter id="vein" x="-10%" y="-10%" width="120%" height="120%" filterUnits="userSpaceOnUse" color-interpolation-filters="sRGB">
                  <feTurbulence type="fractalNoise" baseFrequency="0.040" numOctaves="4" seed="9" result="n" />
                  <feDisplacementMap in="SourceGraphic" in2="n" scale="26" xChannelSelector="R" yChannelSelector="G" />
                  <feGaussianBlur stdDeviation="0.600" />
                </filter>
                <filter id="streak" x="0" y="0" width="100%" height="100%" color-interpolation-filters="sRGB">
                  <feTurbulence type="fractalNoise" baseFrequency="0.022 0.110" numOctaves="4" seed="11" />
                  <feColorMatrix values="0 0 0 0 0  0 0 0 0 0  0 0 0 0 0  2.400 0 0 0 -0.950" />
                </filter>
                <filter id="grain" x="0" y="0" width="100%" height="100%" color-interpolation-filters="sRGB">
                  <feTurbulence type="turbulence" baseFrequency="0.045" numOctaves="5" seed="21" />
                  <feColorMatrix values="0 0 0 0 0  0 0 0 0 0  0 0 0 0 0  -3.500 0 0 0 0.850" />
                </filter>
                <radialGradient id="east" gradientUnits="userSpaceOnUse" cx="0" cy="0" r="1" gradientTransform="translate(900 480) rotate(-4) scale(200 290)">
                  <stop offset="0" stop-color="#848484" /><stop offset=".15" stop-color="#626262" /><stop offset=".4" stop-color="#383838" /><stop offset=".7" stop-color="#1a1a1a" /><stop offset="1" stop-color="#050505" stop-opacity="0" />
                </radialGradient>
                <linearGradient id="ne" gradientUnits="userSpaceOnUse" x1="790" y1="310" x2="890" y2="240">
                  <stop offset="0" stop-color="#555" stop-opacity="0" /><stop offset="1" stop-color="#666" />
                </linearGradient>
                <linearGradient id="nw" x1="0" y1="0" x2=".6" y2="1">
                  <stop offset="0" stop-color="#1c1c1c" /><stop offset="1" stop-color="#1c1c1c" stop-opacity="0" />
                </linearGradient>
                <clipPath id="frame"><path d="M531 205h97v-1h258v708h-354v-614h-1z" /></clipPath>
              </defs>
              <g clip-path="url(#frame)">
                <rect x="531" y="203" width="355" height="709" fill="#040404" />
                <rect x="531" y="203" width="180" height="130" fill="url(#nw)" />
                <rect x="531" y="203" width="355" height="709" fill="url(#east)" />
                <path d="M800 190h100v200q-30-60-70-110z" fill="url(#ne)" filter="url(#soft)" />
                <path d="M635 195h70l-5 50-30 40-25-40z" fill="#2c2c2c" filter="url(#soft)" />
                <path d="M780 700l120 50v180h-150z" fill="#171717" filter="url(#soft)" />
                <path d="M745 600l60-10 95 0v130l-60-10-60-30z" fill="#2c2c2c" filter="url(#soft)" opacity=".8" />
                <g transform="rotate(12 800 480)"><rect x="700" y="150" width="260" height="600" filter="url(#streak)" opacity=".28" /></g>
                <g fill="none" stroke="#000" stroke-width="1.600" opacity=".4" filter="url(#vein)"><path v-for="(v, k) in valleys" :key="k" :d="v" /></g>
                <path d="M552 565l45 15 50 40 30 55 70 15 20 18v30h-250v-25l40-40 10-50z" fill="#606060" filter="url(#soft)" />
                <path d="M520 700l60-10 40 10v50h-100z" fill="#707070" filter="url(#soft)" />
                <path d="M595 600l50 20 25 45 80 15 15 30-60 15-120-40z" fill="#8c8c8c" filter="url(#soft)" />
                <path d="M560 572l30 20 28 12" fill="none" stroke="#6a6a6a" stroke-width="12" filter="url(#ridge)" />
                <path d="M618 604l32 20 15 22 10 18 28 20 58 8" fill="none" stroke="#ddd" stroke-width="20" filter="url(#ridge)" />
                <path d="M656 622l8 30 22 30 30 12 48 0" fill="none" stroke="#fff" stroke-width="15" filter="url(#ridge)" />
                <path d="M664 562l14 22-8 36M756 582l16 20-12 20" fill="none" stroke="#666" stroke-width="9" filter="url(#ridge)" />
                <path d="M778 644l-26 30M700 624l18 22 10 14" fill="none" stroke="#8a8a8a" stroke-width="8" filter="url(#ridge)" />
                <path d="M755 600l50 0-5 40-40 20z" fill="#2c2c2c" filter="url(#soft)" />
                <path d="M795 728l26 12 30-10" fill="none" stroke="#777" stroke-width="12" filter="url(#ridge)" />
                <path d="M835 745l60-10v70l-40-20z" fill="#959595" filter="url(#soft)" />
                <path d="M515 870h70l30 15 20 40h-120z" fill="#f4f4f4" filter="url(#soft)" />
                <path d="M805 930l25-35 20-25 50-25v85z" fill="#858585" filter="url(#soft)" />
                <path d="M835 905l14-8 16 10" fill="none" stroke="#eee" stroke-width="14" filter="url(#ridge)" />
                <rect x="531" y="550" width="355" height="362" filter="url(#grain)" opacity=".4" />
              </g>
              <path v-for="(p, k) in pts" :key="k" :d="`M${p[0]} ${p[1] - 3.3}l3.300 3.300-3.300 3.300-3.300-3.300z`" fill="#7fa300" stroke="#141b00" />
            </svg>
            <div class="vbar"><i></i></div>
          </div>
          <div class="viewbar">
            <div class="vb on"><svg width="12" height="12"><rect x="1" y="1" width="10" height="10" fill="#d8e8a8" stroke="#333" stroke-width="1.500" /><path d="M3 9l6-6" stroke="#5a8a2a" stroke-width="2" /></svg></div>
            <div class="vb n"><svg width="10" height="12"><path d="M1 1h5l3 3v7h-8z" fill="#fff" stroke="#333" stroke-width="1.400" /><path d="M3 6h4M3 8.500h4" stroke="#2a6ab0" /></svg></div>
            <div class="vs"></div>
            <div class="vb"><svg width="13" height="12"><path d="M2 6q1-5 7-3M11 6q-1 5-7 3" fill="none" stroke="#1c4f96" stroke-width="1.600" /><path d="M10 0v5h-5zM3 12v-5h5z" fill="#1c4f96" /></svg></div>
            <div class="vb"><svg width="10" height="10"><path d="M2.500 1v8M7.500 1v8" stroke="#1c5fc0" stroke-width="2.500" /></svg></div>
            <i class="hthumb"></i>
          </div>
        </main>

        <div class="dock">
          <div class="tab t1"><svg viewBox="0 0 24 24" width="22" height="22" v-html="icons.wcat"></svg><span>Catalog</span></div>
          <div class="tab t2"><svg viewBox="0 0 24 24" width="22" height="22" v-html="icons.wsearch"></svg><span>Search</span></div>
        </div>
      </div>

      <footer class="status">
        <span v-fit="271">451211,046&nbsp; 9129844,537 Decimal Degrees</span>
        <svg width="12" height="12"><path d="M8 0h3v3h-3zM4 4h3v3h-3zM8 4h3v3h-3zM0 8h3v3h-3zM4 8h3v3h-3zM8 8h3v3h-3z" fill="#c4c4c4" /></svg>
      </footer>
    </section>

    <!-- Context menus -->
    <div class="menu m1">
      <template v-for="(m, k) in menu" :key="k">
        <hr v-if="!m" />
        <div v-else :class="['mi', { hot: m.hot, off: m.off }]">
          <svg class="mic" viewBox="0 0 24 24" width="21" height="21" v-html="m.i ? icons[m.i] : ''"></svg>
          <p><span v-fit="m.w">{{ m.t }}</span></p>
          <svg v-if="m.sub" class="arr" width="6" height="10"><path d="M0 0v10l5.500-5z" fill="#000" /></svg>
        </div>
      </template>
    </div>
    <div class="menu m2">
      <template v-for="(m, k) in submenu" :key="k">
        <hr v-if="!m" />
        <div v-else :class="['mi', { hot: m.hot, off: m.off }]">
          <svg class="mic" viewBox="0 0 24 24" width="21" height="21" v-html="m.i ? icons[m.i] : ''"></svg>
          <p><span v-fit="m.w">{{ m.t }}</span></p>
        </div>
      </template>
    </div>
    <div class="tip">
      <b><span v-fit="82">Export Data</span></b>
      <p><span v-fit="227">Save this layer's data as a shapefile</span></p>
      <p><span v-fit="187">or geodatabase feature class</span></p>
    </div>

    <!-- Word -->
    <section class="word">
      <header class="wtitle">
        <svg class="wlogo" width="21" height="22"><rect x="6" y="1" width="14" height="20" rx="1" fill="none" stroke="#7fa5dc" stroke-width="1.500" /><path d="M12 6h8M12 11h8M12 16h8" stroke="#7fa5dc" stroke-width="1.500" /><rect x="0" y="5" width="12" height="12" fill="#7fa5dc" /><text x="6" y="15" text-anchor="middle" font-size="10.500" font-weight="700" fill="#185abd">W</text></svg>
        <svg class="more" width="10" height="8"><path d="M1 1l3 3-3 3M6 1l3 3-3 3" fill="none" stroke="#7fa5dc" stroke-width="1.200" /></svg>
        <div class="wname"><span v-fit="125">LKP_PDS B_ACAR...</span></div>
        <svg class="wchev" width="13" height="8"><path d="M1 1l5.500 5.500L12 1" fill="none" stroke="#7fa5dc" stroke-width="1.300" /></svg>
        <svg class="wfind" width="18" height="19"><circle cx="11" cy="7" r="6" fill="none" stroke="#7fa5dc" stroke-width="1.300" /><path d="M7 12l-6 6" stroke="#7fa5dc" stroke-width="1.300" /></svg>
        <svg class="ava" width="30" height="30"><circle cx="15" cy="15" r="14.500" fill="#27a30d" stroke="#d4ecd0" /><path d="M20 11l9 8q-4 9-12 10l-6-9z" fill="#147a06" /><path d="M10 10h4v4h-4zM17 10h4v4h-4zM14 14h3v2h2v5h-2v-2h-3v2h-2v-5h2z" fill="#0a1a06" /></svg>
        <svg class="wb" width="14" height="14"><path d="M1 6.500h12" stroke="#7fa5dc" /></svg>
        <svg class="wb" width="14" height="14"><rect x="1" y="1" width="12" height="12" rx="1.500" fill="none" stroke="#7fa5dc" stroke-width="1.300" /></svg>
        <svg class="wb" width="14" height="14"><path d="M1 1l12 12M13 1L1 13" stroke="#7fa5dc" stroke-width="1.300" /></svg>
      </header>
      <nav class="wtabs">
        <div v-for="t in wordTabs" :key="t.t" :class="{ cur: t.t === 'Home', sp: t.sep }" :style="t.s"><span v-fit="t.w">{{ t.t }}</span></div>
        <button>›</button>
      </nav>
      <div class="ribbon">
        <div class="rg g1">
          <div class="main">
            <svg width="34" height="38" viewBox="0 0 34 38"><path d="M1.500 5.500h26v29h-26z" fill="#fff" stroke="#e8912d" stroke-width="2.500" /><path d="M3.500 7.500h22v25h-22z" fill="#fbe3b4" /><path d="M6 32v-22h17v22z" fill="#fafafa" /><path d="M7 10v-5h4q0-4 3.500-4t3.500 4h4v5z" fill="#fff" stroke="#777" stroke-width="1.600" /><rect x="17.500" y="16.500" width="15" height="21" fill="#fafafa" stroke="#444" stroke-width="1.800" /></svg>
            <span><em v-fit="34">Paste</em></span>
            <svg class="cv" width="8" height="6"><path d="M1 1l3 3 3-3" fill="none" stroke="#222" stroke-width="1.500" /></svg>
          </div>
          <div class="side">
            <svg width="16" height="20"><path d="M4 0l6 14M12 0L6 14" stroke="#8a8a8a" fill="none" stroke-width="1.200" /><circle cx="4.500" cy="16.500" r="2.500" fill="none" stroke="#8a8a8a" stroke-width="1.200" /><circle cx="11.500" cy="16.500" r="2.500" fill="none" stroke="#8a8a8a" stroke-width="1.200" /></svg>
            <svg width="21" height="21"><path d="M1 1h6l3 3v12h-9z" fill="#f2f2f2" stroke="#999" stroke-width="1.200" /><path d="M8 5h7l5 5v10h-12z" fill="#f2f2f2" stroke="#999" stroke-width="1.200" /><path d="M11 12h6M11 15h6" stroke="#999" /></svg>
            <svg width="21" height="21"><path d="M2 10l8-3 6 7-7 6z" fill="#fbd9a0" stroke="#e07b1a" stroke-width="1.500" /><path d="M3 12l9 5M6 15l3 5" stroke="#e07b1a" stroke-width="1.500" /><path d="M9 6l3-2 3 2 4-5 2 2-4 5 1 3-3 3z" fill="#e8e8e8" stroke="#333" stroke-width="1.300" /></svg>
          </div>
        </div>
        <div class="rg g2">
          <svg width="40" height="40"><path d="M10 28L20 2l10 26M13.500 19h13" fill="none" stroke="#333" stroke-width="1.900" /><rect x="0" y="29" width="40" height="10" fill="#222" /></svg>
          <span><em v-fit="28.500">Font</em></span><svg class="cv" width="8" height="6"><path d="M1 1l3 3 3-3" fill="none" stroke="#222" stroke-width="1.500" /></svg>
        </div>
        <div class="rg g3">
          <svg width="36" height="40"><path d="M0 6h36M5 12.500h26M0 19h36M5 25h26M0 31.500h36" stroke="#444" stroke-width="1.600" /></svg>
          <span><em v-fit="67">Paragraph</em></span><svg class="cv" width="8" height="6"><path d="M1 1l3 3 3-3" fill="none" stroke="#222" stroke-width="1.500" /></svg>
        </div>
        <div class="rg g4">
          <svg width="38" height="40"><path d="M2 33L13 5l8 20M6 24h10" fill="none" stroke="#333" stroke-width="2.800" /><path d="M20 26L33 14q4-1 3 2L25 31z" fill="#fff" stroke="#444" stroke-width="1.500" /><path d="M10 38q4-2 4-6q3-5 8-3q3 3 0 7-5 4-12 2z" fill="#7db8ea" stroke="#1f6fbf" stroke-width="1.300" /></svg>
          <span><em v-fit="38">Styles</em></span><svg class="cv" width="8" height="6"><path d="M1 1l3 3 3-3" fill="none" stroke="#222" stroke-width="1.500" /></svg>
        </div>
        <div class="rg g5">
          <svg width="38" height="40"><circle cx="23" cy="14" r="13" fill="#fafafa" stroke="#444" stroke-width="1.500" /><path d="M14 24L1 37" stroke="#444" stroke-width="1.600" /></svg>
          <span><em v-fit="46">Editing</em></span><svg class="cv" width="8" height="6"><path d="M1 1l3 3 3-3" fill="none" stroke="#222" stroke-width="1.500" /></svg>
        </div>
        <div class="rg g6">
          <svg width="36" height="40"><path d="M1 4h34v34h-34zM5 8h11.500v11h-11.500zM19.500 8h11.500v11h-11.500zM5 23h11.500v11h-11.500zM19.500 23h11.500v11h-11.500z" fill="none" stroke="#e0532a" stroke-width="1.900" /></svg>
          <span><em v-fit="52">Add-ins</em></span>
        </div>
        <div class="glabels">
          <span class="q1"><em v-fit="58">Clipboard</em></span>
          <svg width="11" height="11"><path d="M1 10V1h9M4 4l6 6M10 5v5h-5" fill="none" stroke="#333" stroke-width="1.200" /></svg>
          <span class="q2"><em v-fit="33">Styles</em></span>
          <svg width="11" height="11"><path d="M1 10V1h9M4 4l6 6M10 5v5h-5" fill="none" stroke="#333" stroke-width="1.200" /></svg>
          <span class="q3"><em v-fit="45">Add-ins</em></span>
          <svg class="coll" width="13" height="8"><path d="M1 1l5.500 5.500L12 1" fill="none" stroke="#222" stroke-width="1.600" /></svg>
        </div>
      </div>
      <div class="hruler">
        <div class="corner"><svg width="8" height="9"><path d="M1.500 0v7h6" fill="none" stroke="#666" stroke-width="2.600" /></svg></div>
        <svg width="580" height="29">
          <rect x="55" y="5" width="423" height="17" fill="#fff" />
          <template v-for="(t, k) in hTicks" :key="k">
            <text v-if="t.n" :x="t.x" y="18.500" text-anchor="middle" font-size="12.500" fill="#444">{{ t.n }}</text>
            <path v-else-if="t.bar" :d="`M${t.x} 10v7`" stroke="#666" />
            <rect v-else :x="t.x - 0.5" y="13" width="1.500" height="1.500" fill="#666" />
          </template>
          <path d="M43.500 8v12M45.500 8v12M47.500 8v12M49.500 8v12M51.500 8v12M480 8v12M482 8v12M484 8v12M486 8v12" stroke="#777" />
          <path d="M75.500 2.500h13v4l-6.500 5-6.500-5zM75.500 22.500v-4l6.500-5 6.500 5v4zM75.500 22.500h13v6h-13zM473.500 23.500v-4l6.500-5 6.500 5v4z" fill="#fff" stroke="#777" />
        </svg>
      </div>
      <div class="wbody">
        <div class="vruler">
          <svg width="30" height="740">
            <rect x="4" y="117" width="19" height="623" fill="#fff" />
            <template v-for="(t, k) in vTicks" :key="k">
              <text v-if="t.n" :transform="`translate(20 ${t.y}) rotate(-90)`" text-anchor="middle" font-size="12.500" fill="#444">{{ t.n }}</text>
              <path v-else-if="t.bar" :d="`M12 ${t.y}h7`" stroke="#666" />
              <rect v-else x="15" :y="t.y" width="1.500" height="1.500" fill="#666" />
            </template>
          </svg>
        </div>
        <article class="page">
          <div class="cell">
            <svg class="shot1" width="143" height="125">
              <rect width="143" height="125" fill="#fff" />
              <path d="M0 99h50v26h-50zM128 94h15v31h-15zM0 116h143v9h-143z" fill="#efefef" />
              <path d="M0 98.500h26" stroke="#999" stroke-width="1.500" />
              <rect x="0" y="0" width="8" height="5" fill="#e6cf6a" stroke="#a8903a" stroke-width=".6" />
              <text x="10" y="5.500" font-size="7" textLength="66" lengthAdjust="spacingAndGlyphs" fill="#333">D:\Semester 4\PDS\Acara</text>
              <path d="M77 0v12M80 0v12" stroke="#999" />
              <rect x="9" y="8.500" width="6" height="6" fill="#c8cdd2" stroke="#667" stroke-width=".7" />
              <rect x="18" y="7" width="22" height="9" fill="#0a74da" /><text x="19" y="14" font-size="7.200" textLength="20" lengthAdjust="spacingAndGlyphs" fill="#fff">Sheet2$</text>
              <path d="M6 107h7v8h-7zM6 110h7M6 113h7M16 107v8M21 107v8M27 107v8l-5-4zM38 107v8l-4-4z" fill="#ccc" stroke="#bbb" />
              <text x="128" y="114" font-size="7.200" textLength="13" lengthAdjust="spacingAndGlyphs" fill="#333">Page</text>
              <rect x="37.500" y="10.500" width="91" height="106" fill="#fdfdfd" stroke="#888" />
              <path d="M54 34.500h74M54 46.500h74M54 58h74M54 70.500h74M54 104.500h74" stroke="#bbb" />
              <rect x="38" y="93" width="90" height="10.500" fill="#b4d6f2" stroke="#2f93dc" />
              <path d="M40 13.500h8v8h-8zM40 16h8M40 19h8M43 13v8" fill="#ddd" stroke="#555" stroke-width=".8" />
              <path d="M41 37.500l5 5M46 37.500l-5 5" stroke="#222" stroke-width="1.600" />
              <path d="M40 73l4-1 3 3-1 3-3 1-3-3z" fill="#888" stroke="#333" /><path d="M40 86l2-2 1 2 2-2 2 3M41 90v-3M45 90v-3" stroke="#c33" stroke-width="1.100" fill="none" />
              <path d="M41 95h2v2h-2zM45 95h2v2h-2zM41 100h2v2h-2zM45 100h2v2h-2z" fill="#222" />
              <path d="M40 107h7v8h-7z" fill="#dce9f6" stroke="#567" stroke-width=".8" /><path d="M42 106h6v3h-6z" fill="#e0b878" />
              <template v-for="m in shotItems" :key="m[0]">
                <text x="53.500" :y="m[1] + 2.500" font-size="7.200" :textLength="m[2]" lengthAdjust="spacingAndGlyphs" fill="#222">{{ m[0] }}</text>
                <path v-if="m[3]" :d="`M122 ${m[1] - 2}v4l2.500-2z`" fill="#111" />
              </template>
              <defs><linearGradient id="tipg" x1="0" y1="0" x2="0" y2="1"><stop offset="0" stop-color="#fff" /><stop offset="1" stop-color="#cdd9ed" /></linearGradient></defs>
              <rect x="77.500" y="59.500" width="70" height="34.500" fill="url(#tipg)" stroke="#888" />
              <text x="80" y="69.500" font-size="7.400" font-weight="600" textLength="42" lengthAdjust="spacingAndGlyphs" fill="#444">Display XY Data</text>
              <text x="83" y="81" font-size="7.200" textLength="60" lengthAdjust="spacingAndGlyphs" fill="#666">Adds a new map layer b</text>
              <text x="83" y="88.500" font-size="7.200" textLength="59" lengthAdjust="spacingAndGlyphs" fill="#666">XY events from a table.</text>
            </svg>
            <div class="li first"><b>9.</b><p class="just"><u>Menyesuaikan</u><u>koordinat</u><span>X</span><span>dan</span><span>Y</span><u>serta</u><u>mengatur</u><u>sistem</u><u>koordinat</u></p></div>
            <div class="li cont"><p><u>menggunakan</u> UTM 49S</p></div>
            <svg class="shot2" width="256" height="283">
              <rect width="256" height="283" fill="#f0f0f0" /><rect width="256" height="16" fill="#f5f5f5" />
              <g font-size="8.300" fill="#2a2a2a">
                <text x="5" y="8" font-size="9.200" textLength="62" fill="#8a8a8a">Display XY Data</text>
                <path d="M241.500 1l7 7M248.500 1l-7 7" stroke="#888" />
                <text x="7.500" y="29" textLength="226" lengthAdjust="spacingAndGlyphs">A table containing X and Y coordinate data can be added to the</text>
                <text x="7.500" y="39" textLength="52" lengthAdjust="spacingAndGlyphs">map as a layer</text>
                <text x="7.500" y="62.500" textLength="207" lengthAdjust="spacingAndGlyphs">Choose a table from the map or browse for another table:</text>
                <path d="M8.500 86v-14.500h217" fill="none" stroke="#777" stroke-width="1.400" /><path d="M8.500 86h217v-14" fill="none" stroke="#ccc" />
                <rect x="214" y="73" width="11" height="12" fill="#e6e6e6" stroke="#888" stroke-width=".8" /><path d="M216.500 77h6l-3 3.500z" fill="#888" />
                <text x="24" y="82" textLength="31" lengthAdjust="spacingAndGlyphs" fill="#888">Sheet2$</text>
                <rect x="233" y="71" width="14" height="14" fill="#fafafa" /><path d="M235 82v-8h4l1 1h4v7zM235 82l3-5h9l-3 5M241 74q2-2 4-1" fill="none" stroke="#888" stroke-width=".8" />
                <rect x="8.500" y="98.500" width="240" height="76" fill="none" stroke="#ddd" /><rect x="12" y="94" width="178" height="9" fill="#f0f0f0" />
                <text x="14.500" y="101" textLength="173" lengthAdjust="spacingAndGlyphs">Specify the fields for the X, Y and Z coordinates:</text>
                <template v-for="f in fields" :key="f[0]">
                  <text x="15.500" :y="f[2] + 9" textLength="26" lengthAdjust="spacingAndGlyphs">{{ f[0] }}</text>
                  <rect x="70.500" :y="f[2] + 0.500" width="168" height="14.500" fill="#fff" stroke="#999" />
                  <text x="73" :y="f[2] + 11" :textLength="f[3]" lengthAdjust="spacingAndGlyphs">{{ f[1] }}</text>
                  <path :d="`M229 ${f[2] + 6}l3.500 3.500 3.500-3.500`" fill="none" stroke="#888" />
                </template>
                <path d="M8.500 283v-96.500h240v96.500" fill="none" stroke="#ddd" /><rect x="12" y="182" width="150" height="9" fill="#f0f0f0" />
                <text x="14.500" y="189" textLength="144" lengthAdjust="spacingAndGlyphs">Coordinate System of Input Coordinates</text>
                <text x="16.500" y="207" textLength="42" lengthAdjust="spacingAndGlyphs">Description:</text>
                <path d="M18.500 283v-70h217.500v70M223.500 213v70" fill="none" stroke="#fff" stroke-width="1.300" />
                <path d="M226.500 222h6.500l-3.300-5z" fill="#999" />
                <text x="21" y="223" textLength="107" lengthAdjust="spacingAndGlyphs">Projected Coordinate System:</text>
                <text x="25.500" y="232.500" textLength="125" lengthAdjust="spacingAndGlyphs">Name: WGS_1984_UTM_Zone_49S</text>
                <text x="21" y="252" textLength="113" lengthAdjust="spacingAndGlyphs">Geographic Coordinate System:</text>
                <text x="25.500" y="261.500" textLength="85" lengthAdjust="spacingAndGlyphs">Name: GCS_WGS_1984</text>
              </g>
            </svg>
            <div class="li i10"><b>10.</b><p>A</p></div>
            <div class="li i11"><b>11.</b><p>A</p></div>
            <div class="li"><b>12.</b><p>A</p></div>
            <div class="li"><b>13.</b></div>
          </div>
        </article>
      </div>
      <footer class="wstatus">
        <span class="s1"><em v-fit="74">Page 9 of 12</em></span>
        <svg class="s2" width="18" height="18"><path d="M4 1H1v4M14 1h3v4M4 17H1v-4M14 17h3v-4" fill="none" stroke="#333" stroke-width="1.300" /><path d="M5 3.500h5l3 3v8h-8z" fill="#fff" stroke="#333" stroke-width="1.400" /></svg>
        <span><em v-fit="33">Focus</em></span>
        <svg class="s3" width="18" height="18"><path d="M1 2h6l2 1.500 2-1.500h6v13h-6l-2 1.500-2-1.500h-6zM9 3v13M3 5.500h4M3 8.500h4M3 11.500h4M11 5.500h4M11 8.500h4M11 11.500h4" fill="none" stroke="#333" stroke-width="1.300" /></svg>
        <div class="s4"><svg width="16" height="18"><rect x="1" y="1" width="14" height="16" fill="#f4f4f4" stroke="#333" stroke-width="1.500" /><path d="M4 4.500h8M4 7h8M4 9.500h8M4 12h8M4 14.500h8" stroke="#333" stroke-width="1.300" /></svg></div>
        <svg class="s5" width="19" height="18"><path d="M8 15h-7V1h15v6M3 4.500h11M3 7.500h6M3 10.500h4" fill="none" stroke="#333" stroke-width="1.300" /><circle cx="13" cy="12" r="5" fill="#fff" stroke="#333" stroke-width="1.500" /><path d="M8 12h10M13 7v10M11 8q-1 4 0 8M15 8q1 4 0 8" stroke="#333" fill="none" /></svg>
        <svg class="s6" width="160" height="16"><path d="M1 8h10M148 8h10M153 3v10M17 8.500h125" stroke="#444" stroke-width="1.200" /><path d="M79.500 5v8" stroke="#444" /><rect x="57" y="1" width="6" height="14" fill="#555" /></svg>
        <span class="s7"><em v-fit="25">70%</em></span>
      </footer>
    </section>

    <!-- Taskbar -->
    <footer class="task">
      <div class="apps">
        <div class="ap"><svg width="29" height="29"><defs><linearGradient id="wn" x1="0" y1="0" x2="1" y2="1"><stop offset="0" stop-color="#7fe4fb" /><stop offset="1" stop-color="#1aa0f4" /></linearGradient></defs><path d="M0 0h14v14h-14zM15 0h14v14h-14zM0 15h14v14h-14zM15 15h14v14h-14z" fill="url(#wn)" /></svg></div>
        <div class="ap run"><svg width="31" height="29"><path d="M0 3q0-2 2-2h9l3 4h-14z" fill="#e0a21a" /><rect x="0" y="5" width="31" height="22" rx="1.500" fill="#fccf4e" /><path d="M5 28v-5q0-3 3-3h15q3 0 3 3v5z" fill="#1769b8" /><path d="M9 23.500h13" stroke="#0c4580" stroke-width="1.500" /></svg></div>
        <div v-for="n in 2" :key="n" class="ap run" :class="'chr' + n">
          <svg width="40" height="40" viewBox="0 0 40 40"><g transform="translate(6 7)"><path d="M15 15L2 7.500A15 15 0 0 1 28 7.500Z" fill="#e33b2e" /><path d="M15 15L28 7.500A15 15 0 0 1 15 30Z" fill="#fbc116" /><path d="M15 15L15 30A15 15 0 0 1 2 7.500Z" fill="#2da34d" /><circle cx="15" cy="15" r="7.500" fill="#fff" /><circle cx="15" cy="15" r="5.600" fill="#3a7df0" /></g>
            <template v-if="n === 1"><circle cx="32" cy="11" r="9.500" fill="#176b86" /><path d="M26 6q5-3 9 1M24 12q6-4 12-1M29 18q4-4 7-2" stroke="#5fa8b0" fill="none" stroke-width="1.300" /></template>
            <template v-else><circle cx="32" cy="10.500" r="9.500" fill="#0c84c8" /><text x="32" y="14.500" text-anchor="middle" font-size="11" fill="#fff">R</text></template></svg>
        </div>
        <div class="ap ff"><svg width="30" height="30"><defs><linearGradient id="ffg" x1=".7" y1="0" x2=".3" y2="1"><stop offset="0" stop-color="#ffe14a" /><stop offset=".5" stop-color="#ff8a1e" /><stop offset="1" stop-color="#f0246a" /></linearGradient></defs><path d="M3 9l2-5 3 4q5-3 8-1l3-7q3 3 5 6l1-1q4 5 4 11 0 13-14 13T1 17q0-5 2-8z" fill="url(#ffg)" /><circle cx="15" cy="16" r="6" fill="#7138c8" /><path d="M5 9l5 0 4 3-5 3q-1 4 3 6-8-1-7-12z" fill="#ff9f24" /></svg></div>
        <div class="ap ed"><svg width="30" height="30"><defs><linearGradient id="edg" x1="0" y1="0" x2="1" y2=".4"><stop offset="0" stop-color="#1fa8e0" /><stop offset="1" stop-color="#5fe04a" /></linearGradient></defs><circle cx="15" cy="15" r="15" fill="#0e62b8" /><path d="M0 14Q2 0 15 0q14 1 15 13-1 8-10 7-2-2 0-5Q18 9 10 9 3 9 0 14z" fill="url(#edg)" /><path d="M20 14q-2 6 3 9 4 1 6-1-1 3-5 6-9-1-11-8-1-6 4-8 3 0 3 2z" fill="#0b0b02" opacity=".9" /><path d="M13 15q-3 5 1 10 4 4 9 3-7 4-13 0-6-5-3-11 2-4 8-4z" fill="#1583d2" /></svg></div>
        <div class="ap run wd"><svg width="29" height="29"><path d="M7 0h22v7H7z" fill="#41a5ee" /><path d="M7 7h22v7H7z" fill="#2b7cd3" /><path d="M7 14h22v8H7z" fill="#185abd" /><path d="M7 22h22v7H7z" fill="#103f91" /><rect x="0" y="7" width="15" height="15" rx="1" fill="#1450a8" /><text x="7.500" y="18.500" text-anchor="middle" font-size="11" font-weight="700" fill="#fff">W</text></svg></div>
        <div class="ap act"><svg viewBox="0 0 24 24" width="32" height="32" v-html="icons.arc"></svg></div>
        <div class="ap run xl"><svg width="29" height="29"><path d="M7 0h11v7H7z" fill="#21a366" /><path d="M18 0h11v7H18z" fill="#33c481" /><path d="M7 7h11v7H7z" fill="#107c41" /><path d="M18 7h11v7H18z" fill="#21a366" /><path d="M7 14h11v15H7z" fill="#185c37" /><path d="M18 14h11v8H18z" fill="#107c41" /><path d="M18 22h11v7H18z" fill="#185c37" /><rect x="0" y="7" width="15" height="15" rx="1" fill="#107c41" /><text x="7.500" y="18.500" text-anchor="middle" font-size="11" font-weight="700" fill="#fff">X</text></svg></div>
      </div>
      <div class="tray">
        <svg class="y1" width="14" height="9"><path d="M1 8l6-6 6 6" fill="none" stroke="#fff" stroke-width="2" /></svg>
        <svg class="y2" width="22" height="18"><path d="M5 15q-4 0-4-4t4-4q2-5 7-4 4 1 5 4 4 1 4 4t-4 4z" fill="#8a8a8a" /><path d="M4 1l15 16" stroke="#fff" stroke-width="1.300" /></svg>
        <svg class="y3" width="21" height="17"><path d="M1 6q9.500-9 19 0M4 9.500q6.500-6 13 0M7 12.500q3.500-3 7 0" fill="none" stroke="#fff" stroke-width="1.600" /><circle cx="10.500" cy="15" r="1.600" fill="#fff" /></svg>
        <svg class="y4" width="20" height="17"><path d="M1 6h3l5-4v13l-5-4h-3z" fill="none" stroke="#fff" stroke-width="1.400" /><path d="M12 6q2 2.500 0 5M14.500 3.500q4 5 0 10" fill="none" stroke="#fff" stroke-width="1.400" /><path d="M17 1.500q4 7 0 14" fill="none" stroke="#666" /></svg>
        <svg class="y5" width="21" height="18"><rect x="2" y="5" width="15" height="11" rx="2" fill="#fff" stroke="#fff" stroke-width="1.500" /><path d="M19 8.500v4" stroke="#fff" stroke-width="2" /><path d="M5 0L0 8h4l-2 6 7-8H5z" fill="#fff" stroke="#0b0b02" /></svg>
        <div class="clock"><span><em v-fit="35">12:04</em></span><span><em v-fit="77">22/04/2025</em></span></div>
      </div>
    </footer>
    <div class="edge"></div>
  </div>
</template>

<style>
body { margin: 0; overflow: hidden; }
</style>

<style scoped>
.desk { position: relative; width: 1920px; height: 1080px; overflow: hidden; background: #0b0b03; font-family: "Open Sans", "Noto Sans", sans-serif; font-size: 14.5px; color: #111; }
.desk * { box-sizing: border-box; }
svg { display: block; flex: none; overflow: visible; }
span { white-space: nowrap; display: inline-block; }
em { font-style: normal; display: inline-block; white-space: nowrap; }
p, hr { margin: 0; }

.behind { position: absolute; left: 1290px; top: 0; width: 30px; height: 1030px; display: flex; flex-direction: column; background: #090a04; border-left: 1px solid #555; color: #ddd; }
.photo { height: 128px; background: linear-gradient(#16210d, #2f4d33 25%, #5c665e 40%, #35452f 55%, #33451f); }
.app { background: #1a1a1a; overflow: hidden; white-space: nowrap; }
.a1 { height: 51px; border-top: 1px solid #444; line-height: 60px; font-size: 12px; }
.a2 { height: 61px; background: #2b2b2b; font-size: 8px; line-height: 58px; padding-left: 4px; }
.a3 { height: 364px; background: #141414; }
.a4 { height: 32px; background: #2a2a2a; line-height: 34px; margin-left: -7px; }
.a5 { height: 47px; background: #171717; line-height: 42px; margin-left: -7px; border-bottom: 3px solid #8a8a8a; }
.a6 { height: 41px; background: #1c1c1c; }
.grow { flex: 1; }
.edge { position: absolute; left: 0; top: 1020px; width: 1920px; height: 1px; background: rgba(130, 130, 130, .55); }

.arc { position: absolute; left: 0; top: 0; width: 1290px; height: 1029px; background: #f0f0f0; border-top: 1px solid #777; display: flex; flex-direction: column; overflow: hidden; border-right: 1px solid #ddd; }
.title { height: 37px; flex: none; background: #f3f3f3; display: flex; align-items: center; padding-left: 7px; gap: 4px; font-size: 14.5px; }
.caps { margin-left: auto; display: flex; gap: 44.500px; padding-right: 22.500px; }
.menubar { height: 32px; flex: none; display: flex; align-items: center; background: linear-gradient(90deg, #efefef, #fafafa); padding-top: 1px; }
.bar { height: 32.400px; flex: none; display: flex; align-items: center; background: linear-gradient(90deg, #f2f2f2, #fafafa); border-top: 1px solid #fafafa; border-bottom: 1px solid #ebebeb; }
.bar2 { height: 32.500px; }
.it { flex: none; height: 100%; display: flex; align-items: center; justify-content: center; }
.k-t, .k-d { justify-content: flex-start; }
.k-a { height: 27px; background: #dbebf9; border: 1px solid #2a87d0; }
.k-s { height: 18px; background: #c2c2c2; }
.k-g { height: 20px; background: repeating-linear-gradient(#aaa 0 2px, transparent 2px 5px); }
.k-o { background: linear-gradient(#f6f6f6, #d8d8d8 60%, #a8a8a8); }
.combo { width: 100%; height: 26px; border: 1px solid #c8c8c8; border-radius: 2px; background: #fff; display: flex; align-items: center; padding: 0 5px; font-size: 14px; }
.combo i { flex: 1; }
.cb-dis { background: linear-gradient(#efefef, #efefef) 3px 3px / 156px 18px no-repeat #fcfcfc; border-width: 2px; }
.cb-layer { border: 2px solid #8a8a8a; border-right-color: #ccc; border-bottom-color: #ccc; padding: 0; height: 23px; gap: 3px; }
.cb-font, .cb-size { border-color: #888; border-width: 1.500px; gap: 6px; padding: 0 3px 0 4px; }
.cb-geo { padding: 0 4px 0 4px; }
.cb-show { background: #f6f6f6; padding: 0 5px 0 2px; height: 26px; border-color: #bbb; }
.cb-show .cv-text { background: #0078d7; color: #5c6470; line-height: 19px; height: 20px; width: 74px; margin-top: -2px; }

.work { height: 802.500px; flex: none; display: flex; order: 5; }
.bar3 { order: 6; height: 33px; }
.status { order: 7; }
.toc { width: 249px; flex: none; display: flex; flex-direction: column; }
.tochead { height: 25px; background: linear-gradient(90deg, #9bb6d8, #b5cde9); display: flex; align-items: center; padding: 1px 6px 0 5px; font-size: 14.5px; color: #222; }
.tochead div { flex: 1; }
.tochead svg + svg { margin-left: 14px; }
.toctools { height: 32px; display: flex; align-items: center; background: linear-gradient(#fcfcfc, #f0f0f0); }
.toctools .k-i { height: 24px; }
.tree { flex: 1; width: 248px; border: 1px solid #9a9da3; border-bottom-width: 2px; border-left-color: #ccc; background: #fff; display: flex; flex-direction: column; padding-top: 2px; overflow: hidden; }
.tr { height: 22.500px; flex: none; display: flex; align-items: center; white-space: nowrap; }
.tr.ramp { height: 90px; align-items: flex-start; padding-left: 97px; gap: 6px; }
.grad { width: 16px; height: 44px; background: linear-gradient(#f4f4f4, #000); }
.hl { display: flex; flex-direction: column; gap: 26px; margin-top: -2px; }
.hl span { line-height: 19px; }
.l0 { padding-left: 9px; } .l1 { padding-left: 33px; } .l2 { padding-left: 57px; } .l3 { padding-left: 74px; }
.exp { width: 11px; height: 11px; margin-top: 3px; flex: none; border: 1px solid #9c9c9c; border-radius: 1px; background: linear-gradient(#3f5f9f, #3f5f9f) center / 5px 1px no-repeat #f6f6f6; }
.fi { margin: 0 6px 0 8px; }
.ti { margin-right: 8px; }
.ck { margin: 0 8px 0 10px; }
.l2 > span { padding: 0 3px; }
.bold { font-weight: 700; }
.sel { background: #0078d7; color: #fff; outline: 1px dotted #d98c3a; line-height: 21px; }
.sym { margin-left: 99px; }
.val { margin-left: 126px; }
.hbar { margin-top: auto; height: 20px; flex: none; background: #f0f0f0; padding: 8px 0 0 21px; }
.hbar i { display: block; width: 98px; height: 3px; border-radius: 2px; background: #8a8a8a; }

.map { width: 1006px; flex: none; margin-left: 6px; margin-top: 1px; height: 801px; display: flex; flex-direction: column; border-left: 2px solid #7a7a7a; border-top: 2px solid #7a7a7a; }
.canvas { flex: 1; background: #fff; display: flex; padding-top: 32px; border-bottom: 1px solid #ddd; position: relative; }
.dem { margin-left: 274px; }
.vbar { position: absolute; right: 0; top: 0; bottom: -1px; width: 22px; background: #f0f0f0; border-left: 1px solid #e0e0e0; }
.vbar i { display: block; margin: 53px 0 0 9px; width: 3px; height: 22px; background: #8a8a8a; border-radius: 2px; }
.viewbar { height: 21px; flex: none; background: #f0f0f0; display: flex; align-items: center; border-bottom: 1px solid #ddd; }
.vb { width: 22px; height: 18px; display: flex; align-items: center; justify-content: center; }
.vb.n { width: 18px; }
.on { background: #cce4fb; }
.vs { width: 1px; height: 16px; background: #aaa; margin: 0 5px 0 4px; }
.hthumb { margin-left: auto; margin-right: 43px; width: 118px; height: 3px; border-radius: 2px; background: #8a8a8a; }
.dock { flex: 1; background: #fbfbfb; padding: 3px 0 0 4px; display: flex; flex-direction: column; }
.tab { width: 26px; border: 1px solid #b0b0b0; border-right: 0; border-radius: 4px 0 0 4px; background: #f4f4f4; padding: 3px 0 0 0; color: #777; }
.t1 { height: 88px; } .t2 { height: 84px; background: #efefef; }
.tab span { writing-mode: vertical-rl; font-family: "Liberation Sans", Arial, sans-serif; font-size: 15.5px; line-height: 22px; margin-top: 3px; letter-spacing: .2px; }
.status { flex: 1; display: flex; align-items: center; padding-left: 950px; border-top: 1px solid #f6f6f6; }
.status svg { margin-left: 53px; margin-top: 8px; }

.menu { position: absolute; background: #fdfdfd; border: 1px solid #808080; padding: 1.700px 1px; box-shadow: 4px 4px 4px rgba(0, 0, 0, .3); background-image: linear-gradient(90deg, #f8f8f8, #ececec); background-size: 33px 100%; background-repeat: no-repeat; }
.m1 { left: 144px; top: 285px; width: 349px; height: 538px; }
.m2 { left: 491px; top: 703px; width: 280px; height: 177px; }
.mi { height: 27.500px; display: flex; align-items: center; border: 1px solid transparent; padding-left: 4px; }
.mic { margin-right: 15.500px; }
.mi p { flex: 1; margin-top: -1px; }
.off { color: #adadad; }
.hot { background: #b3d6f2; border-color: #2a8fe0; }
.arr { margin-right: 8px; }
.menu hr { height: 1px; border: 0; background: #bdbdbd; margin: 1.400px 0 1.350px 42px; }
.tip { position: absolute; left: 633px; top: 773px; width: 259px; height: 89.500px; border: 1px solid #777; background: linear-gradient(#fff, #c9d7ee); box-shadow: 3px 3px 3px rgba(0, 0, 0, .45); padding: 7px 0 0 5px; color: #555; display: flex; flex-direction: column; }
.tip b { line-height: 20px; margin-bottom: 12px; font-weight: 700; }
.tip p { line-height: 18.500px; padding-left: 10px; }

.word { position: absolute; left: 1309px; top: 0; width: 610px; height: 1020px; border-radius: 10px; overflow: hidden; background: #efefef; display: flex; flex-direction: column; box-shadow: 0 0 0 1px #555; color: #333; }
.wtitle { height: 61px; flex: none; background: #185abd; display: flex; align-items: center; color: #7fa5dc; font-size: 15px; border-top: 1px solid #5a7fb8; }
.wlogo { margin-left: 21px; } .more { margin-left: 24px; } .wname { margin-left: 31px; width: 125px; }
.wchev { margin-left: 12px; } .wfind { margin-left: 61px; } .ava { margin-left: 48px; }
.wb { margin-left: 38px; } .wb + .wb { margin-left: 46px; }
.wtabs { height: 37px; flex: none; display: flex; font-size: 17px; line-height: 40px; position: relative; }
.wtabs div { flex: none; position: relative; }
.wtabs .cur { font-weight: 600; border-bottom: 3px solid #1a51ae; height: 35px; }
.sp::before { content: ""; position: absolute; left: -6px; top: 4px; width: 1px; height: 29px; background: #d0d0d0; }
.wtabs button { position: absolute; left: 564px; top: 0; width: 30px; height: 38px; background: #fff; border: 1px solid #888; font-size: 16px; padding: 0; z-index: 2; color: #222; }
.ribbon { margin-left: 11px; width: 588px; height: 125px; flex: none; background: #fff; border-radius: 10px; box-shadow: 0 2px 4px rgba(0, 0, 0, .22); display: flex; padding-top: 8px; position: relative; font-size: 15px; }
.rg { height: 111px; border-right: 1px solid #d0d0d0; display: flex; flex-direction: column; align-items: center; line-height: 20px; }
.rg em { line-height: 20px; }
.cv { margin-top: 5px; }
.g1 { width: 108px; flex-direction: row; align-items: flex-start; padding-left: 23.500px; }
.main { width: 34px; display: flex; flex-direction: column; align-items: center; padding-top: 3px; }
.main svg:first-child { margin-left: 6px; margin-bottom: 5px; }
.side { margin-left: 15.500px; display: flex; flex-direction: column; gap: 11px; align-items: center; padding-top: 2px; }
.g2 { width: 69px; } .g3 { width: 89.500px; } .g4 { width: 72px; } .g5 { width: 69px; } .g6 { width: 76.500px; }
.g2 > span, .g3 > span, .g5 > span { margin-top: 1px; }
.g4 > span, .g6 > span { margin-top: 3.500px; }
.glabels { position: absolute; left: 17px; bottom: 2px; width: 571px; height: 22px; display: flex; align-items: center; font-size: 13px; }
.q1 { width: 76.500px; } .q2 { margin-left: 171px; width: 48px; } .q3 { margin-left: 88px; } .coll { margin-left: 96px; margin-bottom: 12px; }
.hruler { height: 30px; flex: none; display: flex; border-bottom: 1px solid #d4d4d4; }
.corner { width: 30px; border-right: 1px solid #d4d4d4; padding: 12px 0 0 11px; }
.wbody { height: 739px; flex: none; display: flex; overflow: hidden; }
.vruler { width: 30.500px; flex: none; border-right: 1px solid #d4d4d4; }
.page { width: 557.500px; height: 718px; background: #fff; padding: 116px 0 0 48px; font-family: "Liberation Serif", "Times New Roman", serif; color: #000; font-size: 14.300px; }
.cell { width: 438px; height: 602px; border: 1.500px solid #000; border-bottom: 0; padding-left: 32.500px; font-family: inherit; }
.cell svg { font-family: "Open Sans", sans-serif; }
.li { display: flex; height: 24px; margin-left: -21px; line-height: 24px; }
.li b { width: 20.500px; font-weight: 400; flex: none; }
.first { margin-top: 4px; }
.just { width: 398px; display: flex; justify-content: space-between; }
.cont { padding-left: 20.500px; }
.li u { text-decoration: underline wavy #e02020 1.300px; text-underline-offset: 0; text-decoration-skip-ink: none; }
.shot2 { margin-top: 3.500px; overflow: hidden; }
.shot1 { overflow: hidden; }
.i10 { margin-top: 5.500px; height: 48px; }
.wstatus { flex: 1; background: #f3f3f3; border-top: 1px solid #c8c8c8; display: flex; align-items: center; font-size: 13.500px; }
.s1 { margin-left: 16px; width: 74px; } .s2 { margin-left: 71px; margin-right: 3px; } .s3 { margin-left: 30.500px; }
.s4 { margin-left: 16.500px; width: 50px; height: 100%; background: #dedede; display: flex; align-items: center; justify-content: center; }
.s5 { margin-left: 16px; } .s6 { margin-left: 21px; } .s7 { margin-left: 14px; }

.task { position: absolute; left: 0; top: 1029px; width: 1920px; height: 51px; display: flex; background: linear-gradient(90deg, #0a0905, #131304 15%, #0a0c03 35%, #0b0d05 60%, #0c140a 80%, #0b0e06); color: #fff; }
.apps { display: flex; margin-left: 712px; }
.ap { width: 55.200px; height: 46px; display: flex; justify-content: center; align-items: center; position: relative; }
.ap > svg { margin-top: -4px; }
.run::after, .act::after { content: ""; position: absolute; left: 24px; bottom: 1px; width: 8px; height: 4px; border-radius: 2px; background: #999; }
.act::after { width: 20px; left: 15px; background: #4cc2ff; }
.act { width: 49px; margin: 0 3px; background: #1d1e19; border-radius: 4px; }
.apps .chr2 { order: 2; } .apps .act { order: 3; } .apps .xl { order: 4; }
.chr1 > svg, .chr2 > svg { margin-top: -7px; }
.tray { margin-left: auto; margin-right: 24.500px; display: flex; align-items: center; height: 41px; }
.y2 { margin-left: 22px; } .y3 { margin-left: 19px; } .y4 { margin-left: 9px; } .y5 { margin-left: 10px; }
.clock { width: 97px; display: flex; flex-direction: column; align-items: flex-end; line-height: 20px; font-size: 14px; }
</style>
